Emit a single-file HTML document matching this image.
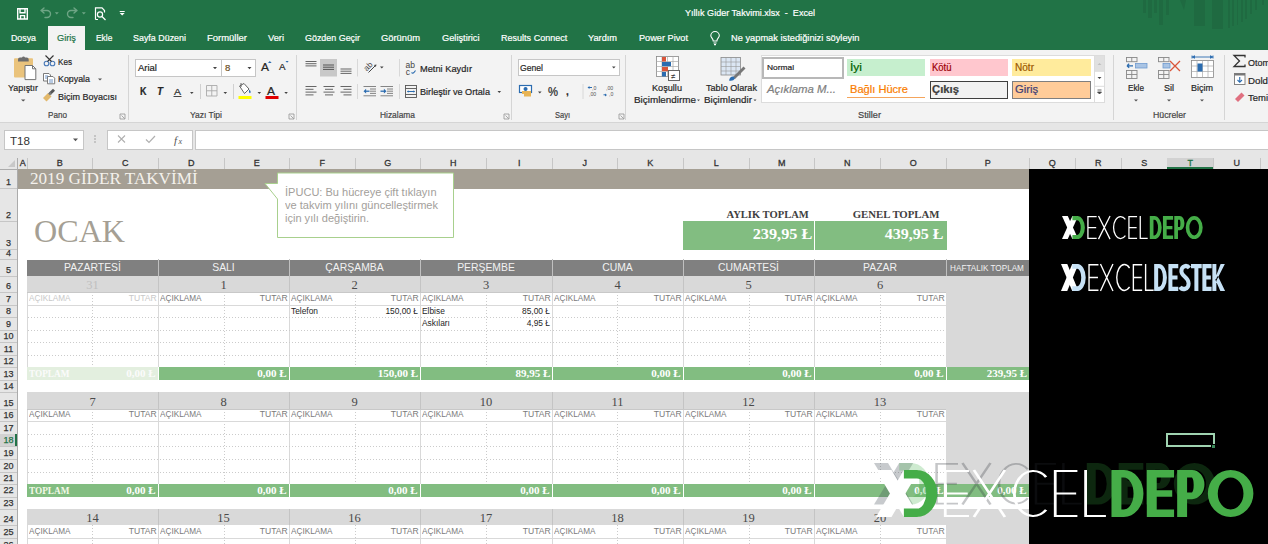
<!DOCTYPE html>
<html><head><meta charset="utf-8"><style>
html,body{margin:0;padding:0;}
body{width:1268px;height:544px;overflow:hidden;position:relative;background:#fff;font-family:"Liberation Sans",sans-serif;}
div{box-sizing:border-box;}
</style></head><body>
<div style="position:absolute;left:0px;top:0px;width:1268px;height:50px;background:#217346;"></div>
<div style="position:absolute;left:48px;top:26px;width:37px;height:24px;background:#f3f3f3;"></div>
<div style="position:absolute;left:0px;top:50px;width:1268px;height:72px;background:#f3f3f3;"></div>
<div style="position:absolute;left:0px;top:122px;width:1268px;height:1px;background:#d5d5d5;"></div>
<div style="position:absolute;left:128px;top:55px;width:1px;height:65px;background:#d5d5d5;"></div>
<div style="position:absolute;left:296px;top:55px;width:1px;height:65px;background:#d5d5d5;"></div>
<div style="position:absolute;left:511px;top:55px;width:1px;height:65px;background:#d5d5d5;"></div>
<div style="position:absolute;left:625px;top:55px;width:1px;height:65px;background:#d5d5d5;"></div>
<div style="position:absolute;left:1113px;top:55px;width:1px;height:65px;background:#d5d5d5;"></div>
<div style="position:absolute;left:1224px;top:55px;width:1px;height:65px;background:#d5d5d5;"></div>
<div style="position:absolute;left:1142.8px;top:0px;width:3.1000000000001364px;height:12.5px;background:#1f6a41;"></div>
<div style="position:absolute;left:1148px;top:0px;width:3.7000000000000455px;height:18px;background:#1f6a41;"></div>
<div style="position:absolute;left:1154px;top:0px;width:3px;height:13px;background:#1f6a41;"></div>
<div style="position:absolute;left:1159px;top:0px;width:3.599999999999909px;height:25px;background:#1f6a41;"></div>
<div style="position:absolute;left:1165.5px;top:0px;width:3.5px;height:15px;background:#1f6a41;"></div>
<div style="position:absolute;left:1194.4px;top:0px;width:10.199999999999818px;height:26px;background:#1f6a41;"></div>
<div style="position:absolute;left:1212.2px;top:0px;width:10.5px;height:29px;background:#1f6a41;"></div>
<div style="position:absolute;left:1228px;top:0px;width:2px;height:28px;background:#1f6a41;"></div>
<div style="position:absolute;left:1232px;top:0px;width:1.7999999999999545px;height:26px;background:#1f6a41;"></div>
<div style="position:absolute;left:1236.7px;top:0px;width:1.7999999999999545px;height:25px;background:#1f6a41;"></div>
<div style="position:absolute;left:1241px;top:0px;width:2px;height:22px;background:#1f6a41;"></div>
<div style="position:absolute;left:1245px;top:0px;width:2px;height:19px;background:#1f6a41;"></div>
<div style="position:absolute;left:1250px;top:0px;width:2px;height:14px;background:#1f6a41;"></div>
<div style="position:absolute;left:1255px;top:0px;width:2px;height:10px;background:#1f6a41;"></div>
<div style="position:absolute;left:1262px;top:0px;width:2px;height:5px;background:#1f6a41;"></div>
<svg style="position:absolute;left:1178px;top:0" width="10" height="12"><path d="M2 0 H8 L6 10 Z" fill="#1f6a41"/></svg>
<div style="position:absolute;left:135px;top:58.6px;width:87px;height:18px;background:#fff;border:1px solid #c6c6c6;"></div>
<div style="position:absolute;left:221px;top:58.6px;width:35px;height:18px;background:#fff;border:1px solid #c6c6c6;"></div>
<div style="position:absolute;left:517.5px;top:58.8px;width:102px;height:17.5px;background:#fff;border:1px solid #c6c6c6;"></div>
<div style="position:absolute;left:761px;top:55.3px;width:344px;height:47.5px;background:#fff;border:1px solid #dcdcdc;"></div>
<div style="position:absolute;left:762px;top:57px;width:82px;height:22px;background:#fff;border:2px solid #b8b8b8;"></div>
<div style="position:absolute;left:847px;top:59.3px;width:78px;height:17px;background:#c6efce;"></div>
<div style="position:absolute;left:929.5px;top:59.3px;width:78px;height:17px;background:#ffc7ce;"></div>
<div style="position:absolute;left:1012px;top:59.3px;width:78.5px;height:17px;background:#ffeb9c;"></div>
<div style="position:absolute;left:929.5px;top:81px;width:78px;height:17.7px;background:#f2f2f2;border:1.5px solid #3f3f3f;"></div>
<div style="position:absolute;left:1012px;top:81px;width:78.5px;height:17.7px;background:#ffcc99;border:1px solid #7f7f7f;"></div>
<div style="position:absolute;left:847px;top:96.8px;width:78px;height:1.6px;background:#f5a55c;"></div>
<div style="position:absolute;left:1094px;top:55.3px;width:11px;height:47.5px;background:#fff;border:1px solid #dcdcdc;"></div>
<div style="position:absolute;left:1095px;top:56.3px;width:9px;height:15px;background:#e0e0e0;"></div>
<svg style="position:absolute;left:0;top:0" width="1268" height="122"><g fill="none" stroke="#fff" stroke-width="1.4"><path d="M17.7 8.7 H27.3 V19 H17.7 Z"/><path d="M20 8.7 V12.7 H25 V8.7"/><path d="M20.5 19 V15.6 H24.5 V19"/></g><g fill="none" stroke="#6ea585" stroke-width="1.4" stroke-linecap="round"><path d="M41 10.5 L44 8 M41 10.5 L44 13 M41 10.5 H47 A3.5 3.5 0 0 1 47 17.5 H45"/><path d="M77 10.5 L74 8 M77 10.5 L74 13 M77 10.5 H71 A3.5 3.5 0 0 0 71 17.5 H73"/></g><path d="M54.8 12.2 h4 l-2 2.2z M81.8 12.2 h4 l-2 2.2z" fill="#6ea585"/><g fill="none" stroke="#fff" stroke-width="1.2"><path d="M95.5 19.5 V7.8 H102 L104.5 10.5 V12.5 M95.5 19.5 H98"/><circle cx="100" cy="14.5" r="2.6"/><path d="M102 16.5 L105.5 20"/></g><path d="M119.7 11 h5 v1 h-5z M119.7 13 h5 l-2.5 2.6z" fill="#fff"/><g fill="none" stroke="#fff" stroke-width="1.1"><path d="M713.2 41 C713.2 38.5 710.8 37.5 710.8 35.8 A4.2 4.2 0 0 1 719.3 35.8 C719.3 37.5 716.9 38.5 716.9 41 Z"/><path d="M713.5 43 H716.6 M714 44.6 H716"/></g><rect x="14" y="58.3" width="19" height="19.3" rx="1" fill="#eac37c"/><path d="M18 61.6 V59.5 Q18 57.5 20 57.5 H22 A1.6 1.6 0 0 1 25 57.5 H26.7 Q28.7 57.5 28.7 59.5 V61.6 Z" fill="#6d6d6d"/><path d="M25 65.5 H32.5 L35.8 68.8 V79.6 H25 Z" fill="#fff" stroke="#737373" stroke-width="1"/><path d="M32.5 65.5 V68.8 H35.8" fill="none" stroke="#737373" stroke-width="1"/><path d="M21 99.6 h4.4 l-2.2 2z" fill="#555"/><g fill="none" stroke-width="1.1"><circle cx="46.5" cy="63.5" r="2.3" stroke="#4a7ab8"/><circle cx="52.5" cy="63.5" r="2.3" stroke="#4a7ab8"/><path d="M47.5 61.5 L53.5 55.5 M51.5 61.5 L45.5 55.5" stroke="#333"/></g><g fill="#fff" stroke="#6d6d6d" stroke-width="0.9"><path d="M43.5 73.5 H49 L50.5 75 V81 H43.5 Z"/><path d="M47.5 76.5 H53 L54.7 78.2 V83.8 H47.5 Z"/></g><path d="M45 76 h3 M45 78 h2 M49 80 h4 M49 82 h4" stroke="#4a7ab8" stroke-width="0.8"/><path d="M43 98 L48 93 L51.5 96.5 L46.5 101.5 Z" fill="#e2b86b"/><path d="M49 92.5 L53 88.8 L55 90.8 L51.2 94.6 Z" fill="#555"/><path d="M48 93.5 L50 91.8 L52 93.8 L50 95.5Z" fill="#777"/><path d="M213 67 h4 l-2 2.2z M247.5 67 h4 l-2 2.2z" fill="#444"/><path d="M268 63 l1.8 -2 l1.8 2z" fill="#2b6cb0"/><path d="M285.5 61 l1.6 1.8 l1.6 -1.8z" fill="#2b6cb0"/><path d="M190 92 h3.6 l-1.8 2z M223.5 92 h3.6 l-1.8 2z M257.5 92 h3.6 l-1.8 2z M284.3 92 h3.6 l-1.8 2z" fill="#444"/><path d="M200.5 84 V99 M233.5 84 V99" stroke="#d0d0d0" stroke-width="1"/><path d="M173.5 96.5 h8" stroke="#444" stroke-width="1"/><g stroke="#aaa" stroke-width="0.9" fill="none"><path d="M206.5 85.5 h10.5 v10.5 h-10.5z M211.75 85.5 v10.5 M206.5 90.75 h10.5"/></g><path d="M239.5 86 L244 83.5 L249 89 L244.5 93.5 Z" fill="#fff" stroke="#555" stroke-width="0.9"/><path d="M241 83 V87" stroke="#555" stroke-width="0.9"/><path d="M249.5 89.5 q2 2.5 0.5 3.8 q-1.8 -1 -0.5 -3.8z" fill="#2b6cb0"/><rect x="238.5" y="96" width="13" height="3" fill="#ffff00"/><rect x="265.5" y="96" width="13" height="3" fill="#e00000"/><path d="M120 114 h5 v5 h-5z M121.5 115.5 l3 3" fill="none" stroke="#888" stroke-width="0.7"/><path d="M289 114 h5 v5 h-5z M290.5 115.5 l3 3" fill="none" stroke="#888" stroke-width="0.7"/><path d="M504 114 h5 v5 h-5z M505.5 115.5 l3 3" fill="none" stroke="#888" stroke-width="0.7"/><path d="M619 114 h5 v5 h-5z M620.5 115.5 l3 3" fill="none" stroke="#888" stroke-width="0.7"/><rect x="305.5" y="61.0" width="11" height="1" fill="#666"/><rect x="305.5" y="63.2" width="11" height="1" fill="#666"/><rect x="305.5" y="65.4" width="11" height="1" fill="#666"/><rect x="320" y="59" width="17" height="17.5" fill="#c8c8c8"/><rect x="323" y="64.5" width="11" height="1" fill="#555"/><rect x="323" y="66.7" width="11" height="1" fill="#555"/><rect x="323" y="68.9" width="11" height="1" fill="#555"/><rect x="340.5" y="68.5" width="11" height="1" fill="#666"/><rect x="340.5" y="70.7" width="11" height="1" fill="#666"/><rect x="340.5" y="72.9" width="11" height="1" fill="#666"/><path d="M357.5 59 V76.5 M357.5 84 V99 M399.5 59 V76.5 M399.5 84 V99" stroke="#d8d8d8"/><g transform="translate(368.5 65.5) rotate(-45)"><text x="-5.5" y="3" font-family="Liberation Sans" font-size="8" fill="#444">ab</text></g><path d="M368.5 72.5 L375.5 65.5" stroke="#444" stroke-width="1"/><path d="M376.5 64.5 l-2.6 0.6 l2 2z" fill="#444"/><path d="M380 66.5 h3.6 l-1.8 2z" fill="#444"/><rect x="305.5" y="86.0" width="11" height="1" fill="#666"/><rect x="305.5" y="88.8" width="8" height="1" fill="#666"/><rect x="305.5" y="91.6" width="11" height="1" fill="#666"/><rect x="305.5" y="94.4" width="8" height="1" fill="#666"/><g><rect x="323.5" y="86.0" width="11" height="1" fill="#666"/><rect x="325.0" y="88.8" width="8" height="1" fill="#666"/><rect x="323.5" y="91.6" width="11" height="1" fill="#666"/><rect x="325.0" y="94.4" width="8" height="1" fill="#666"/></g><g><rect x="340.5" y="86.0" width="11" height="1" fill="#666"/><rect x="343.5" y="88.8" width="8" height="1" fill="#666"/><rect x="340.5" y="91.6" width="11" height="1" fill="#666"/><rect x="343.5" y="94.4" width="8" height="1" fill="#666"/></g><path d="M363.5 86.5 h12.5 M370.0 89 h6 M370.0 91.2 h6 M370.0 93.4 h6 M363.5 95.8 h12.5" stroke="#777" stroke-width="0.9"/><path d="M365.0 91.2 h4.5" stroke="#2b6cb0" stroke-width="1.3"/><path d="M363.5 91.2 l2.6 -2.4 v4.8z" fill="#2b6cb0"/><path d="M380.5 86.5 h12.5 M387.0 89 h6 M387.0 91.2 h6 M387.0 93.4 h6 M380.5 95.8 h12.5" stroke="#777" stroke-width="0.9"/><path d="M380.5 91.2 h4.5" stroke="#2b6cb0" stroke-width="1.3"/><path d="M386.5 91.2 l-2.6 -2.4 v4.8z" fill="#2b6cb0"/><g fill="#444" font-family="Liberation Sans" font-size="8"><text x="405.5" y="67.5" font-size="8.5">ab</text><text x="405.8" y="74.5" font-size="8.5">c</text></g><path d="M411.5 72.5 q1.5 2 4 -2" stroke="#2b6cb0" stroke-width="1.1" fill="none"/><g fill="none" stroke="#555" stroke-width="0.9"><rect x="405.5" y="85.5" width="11" height="12"/><path d="M405.5 88.5 h11 M405.5 94.5 h11"/></g><path d="M407.5 91.5 h7" stroke="#2b6cb0" stroke-width="1"/><path d="M407 91.5 l1.5 -1.3 v2.6z M415 91.5 l-1.5 -1.3 v2.6z" fill="#2b6cb0"/><path d="M497.5 91 h3.6 l-1.8 2z" fill="#444"/><path d="M612 66.5 h3.6 l-1.8 2z" fill="#444"/><rect x="519.5" y="85.5" width="12" height="7" fill="#fff" stroke="#2b6cb0" stroke-width="1.2"/><rect x="522" y="91" width="9" height="3" fill="#e8b455"/><rect x="524" y="94" width="7" height="2.5" fill="#e8b455"/><path d="M525.5 87 a2 2 0 1 0 0.1 0" fill="#2b6cb0"/><path d="M538 91.5 h3.6 l-1.8 2z" fill="#444"/><path d="M583 84 V99" stroke="#d8d8d8"/><g font-family="Liberation Sans" font-size="5.2" fill="#555"><text x="592" y="90">,0</text><text x="589" y="95.5">,00</text><text x="606" y="90">,00</text><text x="609" y="95.5">,0</text></g><path d="M587.5 87.5 l2 -1.5 v3z M605 93.5 l2 1.5 l-2 1.5z" fill="#2b6cb0"/><path d="M589 87.5 h3 M603.5 94.8 h2" stroke="#2b6cb0"/><g stroke="#888" stroke-width="0.8" fill="#fff"><rect x="656.5" y="56.5" width="22" height="20"/></g><path d="M656.5 61.5 h22 M656.5 66.5 h22 M656.5 71.5 h22 M662 56.5 v20 M667.5 56.5 v20 M673 56.5 v20" stroke="#aaa" stroke-width="0.7"/><rect x="662" y="57" width="4" height="4.5" fill="#d9553a"/><rect x="662" y="62" width="9" height="4.2" fill="#2b6cb0"/><rect x="662" y="67" width="6" height="4.2" fill="#d9553a"/><rect x="662" y="72" width="4" height="4.5" fill="#2b6cb0"/><rect x="668.5" y="70.5" width="11" height="10" fill="#fff" stroke="#666"/><text x="671" y="78.8" font-family="Liberation Sans" font-size="8" fill="#333">≠</text><rect x="721" y="57.5" width="19.5" height="17.5" fill="#dbe6f3" stroke="#888" stroke-width="0.8"/><path d="M721 62 h19.5 M721 66.5 h19.5 M721 71 h19.5 M726 57.5 v17.5 M731 57.5 v17.5 M736 57.5 v17.5" stroke="#999" stroke-width="0.6"/><path d="M733 77 L743.5 66.5 L745.5 68.5 L735 79 Z" fill="#777"/><path d="M729 80.5 Q730 76 733.5 76.5 L735 78.5 Q733 81.5 729 80.5Z" fill="#2b6cb0"/><path d="M697 99.5 h3 l-1.5 1.7z M753.5 99.5 h3 l-1.5 1.7z" fill="#555"/><path d="M1097.5 65 l2 -2 l2 2z" fill="#c0c0c0"/><path d="M1097.5 77 h4 l-2 2z" fill="#444"/><path d="M1097.5 90 h4 M1097.5 92 h4 l-2 2z" stroke="#444" stroke-width="0.8" fill="#444"/><path d="M1094 71.3 h11 M1094 86.3 h11" stroke="#dcdcdc"/><g fill="none" stroke="#888" stroke-width="0.9"><rect x="1126.5" y="57.5" width="10.5" height="4.2"/><path d="M1131.75 57.5 v4.2"/><rect x="1126.5" y="70.5" width="10.5" height="8"/><path d="M1131.75 70.5 v8 M1126.5 74.5 h10.5"/></g><rect x="1135.5" y="63.5" width="11.5" height="4.5" fill="#a9c4e4" stroke="#6f9bd0" stroke-width="0.8"/><path d="M1127 65.8 h6 M1127 65.8 l2.2 -2 M1127 65.8 l2.2 2" stroke="#2b6cb0" stroke-width="1.2" fill="none"/><g fill="none" stroke="#888" stroke-width="0.9"><rect x="1158.5" y="57.5" width="10.5" height="4.2"/><path d="M1163.75 57.5 v4.2"/><rect x="1158.5" y="70.5" width="10.5" height="8"/><path d="M1163.75 70.5 v8 M1158.5 74.5 h10.5"/></g><rect x="1163" y="63.5" width="7" height="4.5" fill="#a9c4e4" stroke="#6f9bd0" stroke-width="0.8"/><path d="M1170 61 L1180 71 M1180 61 L1170 71" stroke="#d9553a" stroke-width="1.3"/><path d="M1192 57 h21 M1192 55.5 v3 M1213 55.5 v3 M1192.5 57 l2 -1.3 v2.6z M1212.5 57 l-2 -1.3 v2.6z" stroke="#2b6cb0" stroke-width="0.9" fill="#2b6cb0"/><g fill="#fff" stroke="#888" stroke-width="0.8"><rect x="1191.5" y="60.5" width="22" height="17"/></g><path d="M1191.5 66 h22 M1191.5 71.5 h22 M1197 60.5 v17 M1202.5 60.5 v17 M1208 60.5 v17" stroke="#aaa" stroke-width="0.7"/><rect x="1197.5" y="63.5" width="5" height="8" fill="#2b6cb0"/><path d="M1134 99.5 h4 l-2 2z M1167 99.5 h4 l-2 2z M1200 99.5 h4 l-2 2z" fill="#555"/><path d="M1245 57.5 V55.5 H1234 L1239.5 61 L1234 66.5 H1245 V64.5" fill="none" stroke="#333" stroke-width="1.3"/><rect x="1234.5" y="73.5" width="10.5" height="11" fill="#fff" stroke="#777" stroke-width="0.9"/><rect x="1234.5" y="73.5" width="10.5" height="2" fill="#777"/><path d="M1239.75 77 v5 M1237.5 80 l2.25 2.3 l2.25 -2.3" stroke="#2b6cb0" stroke-width="1.1" fill="none"/><path d="M1235 99 L1241.5 92.5 L1244.5 95.5 L1238 102 Z" fill="#e07080"/></svg>
<div style="position:absolute;top:7.76px;font:normal 9.5px/9.5px 'Liberation Sans', sans-serif;color:#fff;white-space:nowrap;-webkit-text-stroke:0.2px currentColor;transform:scaleX(0.952);transform-origin:left;left:685px;">Yıllık Gider Takvimi.xlsx&nbsp;&nbsp;-&nbsp;&nbsp;Excel</div>
<div style="position:absolute;top:33.20px;font:normal 9.8px/9.8px 'Liberation Sans', sans-serif;color:#fff;white-space:nowrap;-webkit-text-stroke:0.2px currentColor;transform:scaleX(0.900);transform-origin:left;left:10.6px;">Dosya</div>
<div style="position:absolute;top:33.20px;font:normal 9.8px/9.8px 'Liberation Sans', sans-serif;color:#217346;white-space:nowrap;-webkit-text-stroke:0.2px currentColor;transform:scaleX(0.943);transform-origin:left;left:56.8px;">Giriş</div>
<div style="position:absolute;top:33.20px;font:normal 9.8px/9.8px 'Liberation Sans', sans-serif;color:#fff;white-space:nowrap;-webkit-text-stroke:0.2px currentColor;transform:scaleX(0.855);transform-origin:left;left:96px;">Ekle</div>
<div style="position:absolute;top:33.20px;font:normal 9.8px/9.8px 'Liberation Sans', sans-serif;color:#fff;white-space:nowrap;-webkit-text-stroke:0.2px currentColor;transform:scaleX(0.909);transform-origin:left;left:133px;">Sayfa Düzeni</div>
<div style="position:absolute;top:33.20px;font:normal 9.8px/9.8px 'Liberation Sans', sans-serif;color:#fff;white-space:nowrap;-webkit-text-stroke:0.2px currentColor;transform:scaleX(0.967);transform-origin:left;left:207px;">Formüller</div>
<div style="position:absolute;top:33.20px;font:normal 9.8px/9.8px 'Liberation Sans', sans-serif;color:#fff;white-space:nowrap;-webkit-text-stroke:0.2px currentColor;transform:scaleX(0.948);transform-origin:left;left:268px;">Veri</div>
<div style="position:absolute;top:33.20px;font:normal 9.8px/9.8px 'Liberation Sans', sans-serif;color:#fff;white-space:nowrap;-webkit-text-stroke:0.2px currentColor;transform:scaleX(0.910);transform-origin:left;left:304.7px;">Gözden Geçir</div>
<div style="position:absolute;top:33.20px;font:normal 9.8px/9.8px 'Liberation Sans', sans-serif;color:#fff;white-space:nowrap;-webkit-text-stroke:0.2px currentColor;transform:scaleX(0.955);transform-origin:left;left:381px;">Görünüm</div>
<div style="position:absolute;top:33.20px;font:normal 9.8px/9.8px 'Liberation Sans', sans-serif;color:#fff;white-space:nowrap;-webkit-text-stroke:0.2px currentColor;transform:scaleX(0.944);transform-origin:left;left:442px;">Geliştirici</div>
<div style="position:absolute;top:33.20px;font:normal 9.8px/9.8px 'Liberation Sans', sans-serif;color:#fff;white-space:nowrap;-webkit-text-stroke:0.2px currentColor;transform:scaleX(0.922);transform-origin:left;left:500.5px;">Results Connect</div>
<div style="position:absolute;top:33.20px;font:normal 9.8px/9.8px 'Liberation Sans', sans-serif;color:#fff;white-space:nowrap;-webkit-text-stroke:0.2px currentColor;transform:scaleX(0.940);transform-origin:left;left:588px;">Yardım</div>
<div style="position:absolute;top:33.20px;font:normal 9.8px/9.8px 'Liberation Sans', sans-serif;color:#fff;white-space:nowrap;-webkit-text-stroke:0.2px currentColor;transform:scaleX(0.937);transform-origin:left;left:638.7px;">Power Pivot</div>
<div style="position:absolute;top:33.20px;font:normal 9.8px/9.8px 'Liberation Sans', sans-serif;color:#fff;white-space:nowrap;-webkit-text-stroke:0.2px currentColor;transform:scaleX(0.947);transform-origin:left;left:731px;">Ne yapmak istediğinizi söyleyin</div>
<div style="position:absolute;top:82.87px;font:normal 9.6px/9.6px 'Liberation Sans', sans-serif;color:#262626;white-space:nowrap;-webkit-text-stroke:0.2px currentColor;transform:scaleX(0.927);transform-origin:left;left:8.1px;">Yapıştır</div>
<div style="position:absolute;top:56.87px;font:normal 9.6px/9.6px 'Liberation Sans', sans-serif;color:#262626;white-space:nowrap;-webkit-text-stroke:0.2px currentColor;transform:scaleX(0.846);transform-origin:left;left:58px;">Kes</div>
<div style="position:absolute;top:73.87px;font:normal 9.6px/9.6px 'Liberation Sans', sans-serif;color:#262626;white-space:nowrap;-webkit-text-stroke:0.2px currentColor;transform:scaleX(0.922);transform-origin:left;left:58px;">Kopyala</div>
<svg style="position:absolute;left:0;top:0" width="130" height="122"><path d="M98 78.5 h4 l-2 2z" fill="#555"/></svg>
<div style="position:absolute;top:91.87px;font:normal 9.6px/9.6px 'Liberation Sans', sans-serif;color:#262626;white-space:nowrap;-webkit-text-stroke:0.2px currentColor;transform:scaleX(0.937);transform-origin:left;left:58px;">Biçim Boyacısı</div>
<div style="position:absolute;top:63.17px;font:normal 9.6px/9.6px 'Liberation Sans', sans-serif;color:#262626;white-space:nowrap;-webkit-text-stroke:0.2px currentColor;transform:scaleX(0.989);transform-origin:left;left:138px;">Arial</div>
<div style="position:absolute;top:63.17px;font:normal 9.6px/9.6px 'Liberation Sans', sans-serif;color:#6b4f1f;white-space:nowrap;-webkit-text-stroke:0.2px currentColor;left:225px;">8</div>
<div style="position:absolute;top:61.69px;font:normal 11px/11px 'Liberation Sans', sans-serif;color:#262626;white-space:nowrap;-webkit-text-stroke:0.2px currentColor;transform:scaleX(1.090);transform-origin:left;left:260.5px;">A</div>
<div style="position:absolute;top:63.38px;font:normal 9px/9px 'Liberation Sans', sans-serif;color:#262626;white-space:nowrap;-webkit-text-stroke:0.2px currentColor;transform:scaleX(1.083);transform-origin:left;left:279px;">A</div>
<div style="position:absolute;top:87.03px;font:bold 10px/10px 'Liberation Sans', sans-serif;color:#262626;white-space:nowrap;-webkit-text-stroke:0.2px currentColor;transform:scaleX(0.900);transform-origin:left;left:140px;">K</div>
<div style="position:absolute;top:87.03px;font:bold 10px/10px 'Liberation Sans', sans-serif;color:#262626;white-space:nowrap;font-style:italic;-webkit-text-stroke:0.2px currentColor;transform:scaleX(0.982);transform-origin:left;left:157px;">T</div>
<div style="position:absolute;top:86.87px;font:normal 9.6px/9.6px 'Liberation Sans', sans-serif;color:#262626;white-space:nowrap;-webkit-text-stroke:0.2px currentColor;transform:scaleX(1.093);transform-origin:left;left:174px;">A</div>
<div style="position:absolute;top:86.53px;font:normal 10px/10px 'Liberation Sans', sans-serif;color:#262626;white-space:nowrap;-webkit-text-stroke:0.2px currentColor;transform:scaleX(1.199);transform-origin:left;left:267px;">A</div>
<div style="position:absolute;top:63.87px;font:normal 9.6px/9.6px 'Liberation Sans', sans-serif;color:#262626;white-space:nowrap;-webkit-text-stroke:0.2px currentColor;transform:scaleX(0.965);transform-origin:left;left:420px;">Metni Kaydır</div>
<div style="position:absolute;top:87.37px;font:normal 9.6px/9.6px 'Liberation Sans', sans-serif;color:#262626;white-space:nowrap;-webkit-text-stroke:0.2px currentColor;transform:scaleX(0.951);transform-origin:left;left:420px;">Birleştir ve Ortala</div>
<div style="position:absolute;top:62.87px;font:normal 9.6px/9.6px 'Liberation Sans', sans-serif;color:#262626;white-space:nowrap;-webkit-text-stroke:0.2px currentColor;transform:scaleX(0.898);transform-origin:left;left:520px;">Genel</div>
<div style="position:absolute;top:85.84px;font:normal 12px/12px 'Liberation Sans', sans-serif;color:#262626;white-space:nowrap;-webkit-text-stroke:0.2px currentColor;transform:scaleX(0.937);transform-origin:left;left:548px;">%</div>
<div style="position:absolute;top:86.53px;font:bold 10px/10px 'Liberation Sans', sans-serif;color:#262626;white-space:nowrap;-webkit-text-stroke:0.2px currentColor;left:566px;">,</div>
<div style="position:absolute;top:82.87px;font:normal 9.6px/9.6px 'Liberation Sans', sans-serif;color:#262626;white-space:nowrap;-webkit-text-stroke:0.2px currentColor;transform:scaleX(0.953);transform-origin:left;left:652px;">Koşullu</div>
<div style="position:absolute;top:94.87px;font:normal 9.6px/9.6px 'Liberation Sans', sans-serif;color:#262626;white-space:nowrap;-webkit-text-stroke:0.2px currentColor;transform:scaleX(1.029);transform-origin:left;left:634px;">Biçimlendirme</div>
<div style="position:absolute;top:82.87px;font:normal 9.6px/9.6px 'Liberation Sans', sans-serif;color:#262626;white-space:nowrap;-webkit-text-stroke:0.2px currentColor;transform:scaleX(0.946);transform-origin:left;left:706px;">Tablo Olarak</div>
<div style="position:absolute;top:94.87px;font:normal 9.6px/9.6px 'Liberation Sans', sans-serif;color:#262626;white-space:nowrap;-webkit-text-stroke:0.2px currentColor;transform:scaleX(1.022);transform-origin:left;left:704px;">Biçimlendir</div>
<div style="position:absolute;top:64.23px;font:normal 8px/8px 'Liberation Sans', sans-serif;color:#262626;white-space:nowrap;-webkit-text-stroke:0.2px currentColor;transform:scaleX(1.047);transform-origin:left;left:767px;">Normal</div>
<div style="position:absolute;top:62.53px;font:normal 10px/10px 'Liberation Sans', sans-serif;color:#006100;white-space:nowrap;-webkit-text-stroke:0.2px currentColor;transform:scaleX(1.200);transform-origin:left;left:849.5px;">İyi</div>
<div style="position:absolute;top:62.53px;font:normal 10px/10px 'Liberation Sans', sans-serif;color:#9c0006;white-space:nowrap;-webkit-text-stroke:0.2px currentColor;transform:scaleX(0.948);transform-origin:left;left:932px;">Kötü</div>
<div style="position:absolute;top:62.53px;font:normal 10px/10px 'Liberation Sans', sans-serif;color:#9c5700;white-space:nowrap;-webkit-text-stroke:0.2px currentColor;transform:scaleX(1.006);transform-origin:left;left:1015px;">Nötr</div>
<div style="position:absolute;top:84.11px;font:normal 10.5px/10.5px 'Liberation Sans', sans-serif;color:#7f7f7f;white-space:nowrap;font-style:italic;-webkit-text-stroke:0.2px currentColor;transform:scaleX(1.085);transform-origin:left;left:767px;">Açıklama M...</div>
<div style="position:absolute;top:84.11px;font:normal 10.5px/10.5px 'Liberation Sans', sans-serif;color:#fa7d00;white-space:nowrap;-webkit-text-stroke:0.2px currentColor;transform:scaleX(1.057);transform-origin:left;left:849.5px;">Bağlı Hücre</div>
<div style="position:absolute;top:84.11px;font:bold 10.5px/10.5px 'Liberation Sans', sans-serif;color:#3f3f3f;white-space:nowrap;-webkit-text-stroke:0.2px currentColor;transform:scaleX(1.076);transform-origin:left;left:932px;">Çıkış</div>
<div style="position:absolute;top:84.11px;font:normal 10.5px/10.5px 'Liberation Sans', sans-serif;color:#3f3f76;white-space:nowrap;-webkit-text-stroke:0.2px currentColor;transform:scaleX(1.066);transform-origin:left;left:1015px;">Giriş</div>
<div style="position:absolute;top:82.87px;font:normal 9.6px/9.6px 'Liberation Sans', sans-serif;color:#262626;white-space:nowrap;-webkit-text-stroke:0.2px currentColor;transform:scaleX(0.857);transform-origin:left;left:1128px;">Ekle</div>
<div style="position:absolute;top:82.87px;font:normal 9.6px/9.6px 'Liberation Sans', sans-serif;color:#262626;white-space:nowrap;-webkit-text-stroke:0.2px currentColor;transform:scaleX(0.937);transform-origin:left;left:1164px;">Sil</div>
<div style="position:absolute;top:82.87px;font:normal 9.6px/9.6px 'Liberation Sans', sans-serif;color:#262626;white-space:nowrap;-webkit-text-stroke:0.2px currentColor;transform:scaleX(0.938);transform-origin:left;left:1191px;">Biçim</div>
<div style="position:absolute;top:57.87px;font:normal 9.6px/9.6px 'Liberation Sans', sans-serif;color:#262626;white-space:nowrap;-webkit-text-stroke:0.2px currentColor;transform:scaleX(0.937);transform-origin:left;left:1248px;">Otom</div>
<div style="position:absolute;top:75.87px;font:normal 9.6px/9.6px 'Liberation Sans', sans-serif;color:#262626;white-space:nowrap;-webkit-text-stroke:0.2px currentColor;transform:scaleX(1.013);transform-origin:left;left:1248px;">Dold</div>
<div style="position:absolute;top:92.87px;font:normal 9.6px/9.6px 'Liberation Sans', sans-serif;color:#262626;white-space:nowrap;-webkit-text-stroke:0.2px currentColor;transform:scaleX(0.987);transform-origin:left;left:1248px;">Temi</div>
<div style="position:absolute;top:109.87px;font:normal 9.6px/9.6px 'Liberation Sans', sans-serif;color:#444;white-space:nowrap;-webkit-text-stroke:0.2px currentColor;transform:scaleX(0.847);transform-origin:left;left:48px;">Pano</div>
<div style="position:absolute;top:109.87px;font:normal 9.6px/9.6px 'Liberation Sans', sans-serif;color:#444;white-space:nowrap;-webkit-text-stroke:0.2px currentColor;transform:scaleX(0.886);transform-origin:left;left:190px;">Yazı Tipi</div>
<div style="position:absolute;top:109.87px;font:normal 9.6px/9.6px 'Liberation Sans', sans-serif;color:#444;white-space:nowrap;-webkit-text-stroke:0.2px currentColor;transform:scaleX(0.875);transform-origin:left;left:380px;">Hizalama</div>
<div style="position:absolute;top:109.87px;font:normal 9.6px/9.6px 'Liberation Sans', sans-serif;color:#444;white-space:nowrap;-webkit-text-stroke:0.2px currentColor;transform:scaleX(0.781);transform-origin:left;left:555px;">Sayı</div>
<div style="position:absolute;top:109.87px;font:normal 9.6px/9.6px 'Liberation Sans', sans-serif;color:#444;white-space:nowrap;-webkit-text-stroke:0.2px currentColor;transform:scaleX(0.958);transform-origin:left;left:858px;">Stiller</div>
<div style="position:absolute;top:109.87px;font:normal 9.6px/9.6px 'Liberation Sans', sans-serif;color:#444;white-space:nowrap;-webkit-text-stroke:0.2px currentColor;transform:scaleX(0.910);transform-origin:left;left:1153px;">Hücreler</div>
<div style="position:absolute;left:0px;top:123px;width:1268px;height:46px;background:#e6e6e6;"></div>
<div style="position:absolute;left:4px;top:130px;width:80px;height:20px;background:#fff;border:1px solid #c6c6c6;"></div>
<div style="position:absolute;top:135.69px;font:normal 11px/11px 'Liberation Sans', sans-serif;color:#333;white-space:nowrap;transform:scaleX(1.055);transform-origin:left;left:10px;">T18</div>
<div style="position:absolute;left:107px;top:130px;width:86px;height:20px;background:#fff;border:1px solid #c6c6c6;"></div>
<div style="position:absolute;left:195px;top:130px;width:1073px;height:20px;background:#fff;border:1px solid #c6c6c6;border-right:none;"></div>
<svg style="position:absolute;left:0;top:122px" width="200" height="36"><path d="M73 16.5 h5 l-2.5 2.8z" fill="#555"/><circle cx="95" cy="14" r="0.7" fill="#888"/><circle cx="95" cy="17" r="0.7" fill="#888"/><circle cx="95" cy="20" r="0.7" fill="#888"/><path d="M118 13.5 l7 7 M125 13.5 l-7 7" stroke="#b0b0b0" stroke-width="1.1"/><path d="M146 17.5 l3 3 l6 -6.5" stroke="#b0b0b0" stroke-width="1.2" fill="none"/></svg>
<div style="position:absolute;top:135.29px;font:normal 11px/11px 'Liberation Serif', serif;color:#555;white-space:nowrap;font-style:italic;left:174px;">f</div>
<div style="position:absolute;top:138.30px;font:normal 8px/8px 'Liberation Serif', serif;color:#555;white-space:nowrap;font-style:italic;left:178.5px;">x</div>
<div style="position:absolute;left:0px;top:158px;width:1268px;height:11px;background:#e6e6e6;"></div>
<div style="position:absolute;left:0px;top:169px;width:1268px;height:1px;background:#ababab;"></div>
<div style="position:absolute;left:27px;top:158px;width:1px;height:11px;background:#c6c6c6;"></div>
<div style="position:absolute;top:159.38px;font:normal 9px/9px 'Liberation Sans', sans-serif;color:#333;white-space:nowrap;-webkit-text-stroke:0.3px currentColor;left:2.8000000000000007px;width:40px;text-align:center;">A</div>
<div style="position:absolute;left:92px;top:158px;width:1px;height:11px;background:#c6c6c6;"></div>
<div style="position:absolute;top:159.38px;font:normal 9px/9px 'Liberation Sans', sans-serif;color:#333;white-space:nowrap;-webkit-text-stroke:0.3px currentColor;left:39.8px;width:40px;text-align:center;">B</div>
<div style="position:absolute;left:158px;top:158px;width:1px;height:11px;background:#c6c6c6;"></div>
<div style="position:absolute;top:159.38px;font:normal 9px/9px 'Liberation Sans', sans-serif;color:#333;white-space:nowrap;-webkit-text-stroke:0.3px currentColor;left:105.3px;width:40px;text-align:center;">C</div>
<div style="position:absolute;left:224px;top:158px;width:1px;height:11px;background:#c6c6c6;"></div>
<div style="position:absolute;top:159.38px;font:normal 9px/9px 'Liberation Sans', sans-serif;color:#333;white-space:nowrap;-webkit-text-stroke:0.3px currentColor;left:171.3px;width:40px;text-align:center;">D</div>
<div style="position:absolute;left:289px;top:158px;width:1px;height:11px;background:#c6c6c6;"></div>
<div style="position:absolute;top:159.38px;font:normal 9px/9px 'Liberation Sans', sans-serif;color:#333;white-space:nowrap;-webkit-text-stroke:0.3px currentColor;left:236.8px;width:40px;text-align:center;">E</div>
<div style="position:absolute;left:355px;top:158px;width:1px;height:11px;background:#c6c6c6;"></div>
<div style="position:absolute;top:159.38px;font:normal 9px/9px 'Liberation Sans', sans-serif;color:#333;white-space:nowrap;-webkit-text-stroke:0.3px currentColor;left:302.3px;width:40px;text-align:center;">F</div>
<div style="position:absolute;left:420px;top:158px;width:1px;height:11px;background:#c6c6c6;"></div>
<div style="position:absolute;top:159.38px;font:normal 9px/9px 'Liberation Sans', sans-serif;color:#333;white-space:nowrap;-webkit-text-stroke:0.3px currentColor;left:367.8px;width:40px;text-align:center;">G</div>
<div style="position:absolute;left:486px;top:158px;width:1px;height:11px;background:#c6c6c6;"></div>
<div style="position:absolute;top:159.38px;font:normal 9px/9px 'Liberation Sans', sans-serif;color:#333;white-space:nowrap;-webkit-text-stroke:0.3px currentColor;left:433.3px;width:40px;text-align:center;">H</div>
<div style="position:absolute;left:552px;top:158px;width:1px;height:11px;background:#c6c6c6;"></div>
<div style="position:absolute;top:159.38px;font:normal 9px/9px 'Liberation Sans', sans-serif;color:#333;white-space:nowrap;-webkit-text-stroke:0.3px currentColor;left:499.29999999999995px;width:40px;text-align:center;">I</div>
<div style="position:absolute;left:617px;top:158px;width:1px;height:11px;background:#c6c6c6;"></div>
<div style="position:absolute;top:159.38px;font:normal 9px/9px 'Liberation Sans', sans-serif;color:#333;white-space:nowrap;-webkit-text-stroke:0.3px currentColor;left:564.8px;width:40px;text-align:center;">J</div>
<div style="position:absolute;left:683px;top:158px;width:1px;height:11px;background:#c6c6c6;"></div>
<div style="position:absolute;top:159.38px;font:normal 9px/9px 'Liberation Sans', sans-serif;color:#333;white-space:nowrap;-webkit-text-stroke:0.3px currentColor;left:630.3px;width:40px;text-align:center;">K</div>
<div style="position:absolute;left:749px;top:158px;width:1px;height:11px;background:#c6c6c6;"></div>
<div style="position:absolute;top:159.38px;font:normal 9px/9px 'Liberation Sans', sans-serif;color:#333;white-space:nowrap;-webkit-text-stroke:0.3px currentColor;left:696.3px;width:40px;text-align:center;">L</div>
<div style="position:absolute;left:814px;top:158px;width:1px;height:11px;background:#c6c6c6;"></div>
<div style="position:absolute;top:159.38px;font:normal 9px/9px 'Liberation Sans', sans-serif;color:#333;white-space:nowrap;-webkit-text-stroke:0.3px currentColor;left:761.8px;width:40px;text-align:center;">M</div>
<div style="position:absolute;left:880px;top:158px;width:1px;height:11px;background:#c6c6c6;"></div>
<div style="position:absolute;top:159.38px;font:normal 9px/9px 'Liberation Sans', sans-serif;color:#333;white-space:nowrap;-webkit-text-stroke:0.3px currentColor;left:827.3px;width:40px;text-align:center;">N</div>
<div style="position:absolute;left:946px;top:158px;width:1px;height:11px;background:#c6c6c6;"></div>
<div style="position:absolute;top:159.38px;font:normal 9px/9px 'Liberation Sans', sans-serif;color:#333;white-space:nowrap;-webkit-text-stroke:0.3px currentColor;left:893.3px;width:40px;text-align:center;">O</div>
<div style="position:absolute;left:1029px;top:158px;width:1px;height:11px;background:#c6c6c6;"></div>
<div style="position:absolute;top:159.38px;font:normal 9px/9px 'Liberation Sans', sans-serif;color:#333;white-space:nowrap;-webkit-text-stroke:0.3px currentColor;left:967.8px;width:40px;text-align:center;">P</div>
<div style="position:absolute;left:1075px;top:158px;width:1px;height:11px;background:#c6c6c6;"></div>
<div style="position:absolute;top:159.38px;font:normal 9px/9px 'Liberation Sans', sans-serif;color:#333;white-space:nowrap;-webkit-text-stroke:0.3px currentColor;left:1032.3px;width:40px;text-align:center;">Q</div>
<div style="position:absolute;left:1121px;top:158px;width:1px;height:11px;background:#c6c6c6;"></div>
<div style="position:absolute;top:159.38px;font:normal 9px/9px 'Liberation Sans', sans-serif;color:#333;white-space:nowrap;-webkit-text-stroke:0.3px currentColor;left:1078.3px;width:40px;text-align:center;">R</div>
<div style="position:absolute;left:1167px;top:158px;width:1px;height:11px;background:#c6c6c6;"></div>
<div style="position:absolute;top:159.38px;font:normal 9px/9px 'Liberation Sans', sans-serif;color:#333;white-space:nowrap;-webkit-text-stroke:0.3px currentColor;left:1124.3px;width:40px;text-align:center;">S</div>
<div style="position:absolute;left:1167px;top:158px;width:46px;height:11px;background:#d2d2d2;"></div>
<div style="position:absolute;left:1167px;top:167px;width:46px;height:2px;background:#217346;"></div>
<div style="position:absolute;left:1213px;top:158px;width:1px;height:11px;background:#c6c6c6;"></div>
<div style="position:absolute;top:159.38px;font:normal 9px/9px 'Liberation Sans', sans-serif;color:#217346;white-space:nowrap;-webkit-text-stroke:0.3px currentColor;left:1170.3px;width:40px;text-align:center;">T</div>
<div style="position:absolute;left:1260px;top:158px;width:1px;height:11px;background:#c6c6c6;"></div>
<div style="position:absolute;top:159.38px;font:normal 9px/9px 'Liberation Sans', sans-serif;color:#333;white-space:nowrap;-webkit-text-stroke:0.3px currentColor;left:1216.8px;width:40px;text-align:center;">U</div>
<div style="position:absolute;left:0px;top:170px;width:17px;height:374px;background:#e6e6e6;"></div>
<div style="position:absolute;left:17px;top:158px;width:1px;height:386px;background:#ababab;"></div>
<div style="position:absolute;left:0px;top:188px;width:17px;height:1px;background:#c6c6c6;"></div>
<div style="position:absolute;top:178.38px;font:normal 9px/9px 'Liberation Sans', sans-serif;color:#333;white-space:nowrap;-webkit-text-stroke:0.25px currentColor;left:0.0px;width:17px;text-align:center;">1</div>
<div style="position:absolute;left:0px;top:221px;width:17px;height:1px;background:#c6c6c6;"></div>
<div style="position:absolute;top:211.18px;font:normal 9px/9px 'Liberation Sans', sans-serif;color:#333;white-space:nowrap;-webkit-text-stroke:0.25px currentColor;left:0.0px;width:17px;text-align:center;">2</div>
<div style="position:absolute;left:0px;top:249px;width:17px;height:1px;background:#c6c6c6;"></div>
<div style="position:absolute;top:239.28px;font:normal 9px/9px 'Liberation Sans', sans-serif;color:#333;white-space:nowrap;-webkit-text-stroke:0.25px currentColor;left:0.0px;width:17px;text-align:center;">3</div>
<div style="position:absolute;left:0px;top:259px;width:17px;height:1px;background:#c6c6c6;"></div>
<div style="position:absolute;top:249.28px;font:normal 9px/9px 'Liberation Sans', sans-serif;color:#333;white-space:nowrap;-webkit-text-stroke:0.25px currentColor;left:0.0px;width:17px;text-align:center;">4</div>
<div style="position:absolute;left:0px;top:276px;width:17px;height:1px;background:#c6c6c6;"></div>
<div style="position:absolute;top:265.88px;font:normal 9px/9px 'Liberation Sans', sans-serif;color:#333;white-space:nowrap;-webkit-text-stroke:0.25px currentColor;left:0.0px;width:17px;text-align:center;">5</div>
<div style="position:absolute;left:0px;top:292px;width:17px;height:1px;background:#c6c6c6;"></div>
<div style="position:absolute;top:282.28px;font:normal 9px/9px 'Liberation Sans', sans-serif;color:#333;white-space:nowrap;-webkit-text-stroke:0.25px currentColor;left:0.0px;width:17px;text-align:center;">6</div>
<div style="position:absolute;left:0px;top:305px;width:17px;height:1px;background:#c6c6c6;"></div>
<div style="position:absolute;top:294.88px;font:normal 9px/9px 'Liberation Sans', sans-serif;color:#333;white-space:nowrap;-webkit-text-stroke:0.25px currentColor;left:0.0px;width:17px;text-align:center;">7</div>
<div style="position:absolute;left:0px;top:317px;width:17px;height:1px;background:#c6c6c6;"></div>
<div style="position:absolute;top:307.18px;font:normal 9px/9px 'Liberation Sans', sans-serif;color:#333;white-space:nowrap;-webkit-text-stroke:0.25px currentColor;left:0.0px;width:17px;text-align:center;">8</div>
<div style="position:absolute;left:0px;top:330px;width:17px;height:1px;background:#c6c6c6;"></div>
<div style="position:absolute;top:319.88px;font:normal 9px/9px 'Liberation Sans', sans-serif;color:#333;white-space:nowrap;-webkit-text-stroke:0.25px currentColor;left:0.0px;width:17px;text-align:center;">9</div>
<div style="position:absolute;left:0px;top:342px;width:17px;height:1px;background:#c6c6c6;"></div>
<div style="position:absolute;top:332.38px;font:normal 9px/9px 'Liberation Sans', sans-serif;color:#333;white-space:nowrap;-webkit-text-stroke:0.25px currentColor;left:0.0px;width:17px;text-align:center;">10</div>
<div style="position:absolute;left:0px;top:355px;width:17px;height:1px;background:#c6c6c6;"></div>
<div style="position:absolute;top:344.88px;font:normal 9px/9px 'Liberation Sans', sans-serif;color:#333;white-space:nowrap;-webkit-text-stroke:0.25px currentColor;left:0.0px;width:17px;text-align:center;">11</div>
<div style="position:absolute;left:0px;top:367px;width:17px;height:1px;background:#c6c6c6;"></div>
<div style="position:absolute;top:357.18px;font:normal 9px/9px 'Liberation Sans', sans-serif;color:#333;white-space:nowrap;-webkit-text-stroke:0.25px currentColor;left:0.0px;width:17px;text-align:center;">12</div>
<div style="position:absolute;left:0px;top:380px;width:17px;height:1px;background:#c6c6c6;"></div>
<div style="position:absolute;top:369.88px;font:normal 9px/9px 'Liberation Sans', sans-serif;color:#333;white-space:nowrap;-webkit-text-stroke:0.25px currentColor;left:0.0px;width:17px;text-align:center;">13</div>
<div style="position:absolute;left:0px;top:392px;width:17px;height:1px;background:#c6c6c6;"></div>
<div style="position:absolute;top:382.38px;font:normal 9px/9px 'Liberation Sans', sans-serif;color:#333;white-space:nowrap;-webkit-text-stroke:0.25px currentColor;left:0.0px;width:17px;text-align:center;">14</div>
<div style="position:absolute;left:0px;top:409px;width:17px;height:1px;background:#c6c6c6;"></div>
<div style="position:absolute;top:399.18px;font:normal 9px/9px 'Liberation Sans', sans-serif;color:#333;white-space:nowrap;-webkit-text-stroke:0.25px currentColor;left:0.0px;width:17px;text-align:center;">15</div>
<div style="position:absolute;left:0px;top:421px;width:17px;height:1px;background:#c6c6c6;"></div>
<div style="position:absolute;top:411.08px;font:normal 9px/9px 'Liberation Sans', sans-serif;color:#333;white-space:nowrap;-webkit-text-stroke:0.25px currentColor;left:0.0px;width:17px;text-align:center;">16</div>
<div style="position:absolute;left:0px;top:434px;width:17px;height:1px;background:#c6c6c6;"></div>
<div style="position:absolute;top:423.68px;font:normal 9px/9px 'Liberation Sans', sans-serif;color:#333;white-space:nowrap;-webkit-text-stroke:0.25px currentColor;left:0.0px;width:17px;text-align:center;">17</div>
<div style="position:absolute;left:0px;top:434px;width:17px;height:12px;background:#d2d2d2;"></div>
<div style="position:absolute;left:15px;top:434px;width:2px;height:12px;background:#217346;"></div>
<div style="position:absolute;left:0px;top:446px;width:17px;height:1px;background:#c6c6c6;"></div>
<div style="position:absolute;top:436.28px;font:normal 9px/9px 'Liberation Sans', sans-serif;color:#217346;white-space:nowrap;-webkit-text-stroke:0.25px currentColor;left:0.0px;width:17px;text-align:center;">18</div>
<div style="position:absolute;left:0px;top:459px;width:17px;height:1px;background:#c6c6c6;"></div>
<div style="position:absolute;top:449.08px;font:normal 9px/9px 'Liberation Sans', sans-serif;color:#333;white-space:nowrap;-webkit-text-stroke:0.25px currentColor;left:0.0px;width:17px;text-align:center;">19</div>
<div style="position:absolute;left:0px;top:472px;width:17px;height:1px;background:#c6c6c6;"></div>
<div style="position:absolute;top:461.68px;font:normal 9px/9px 'Liberation Sans', sans-serif;color:#333;white-space:nowrap;-webkit-text-stroke:0.25px currentColor;left:0.0px;width:17px;text-align:center;">20</div>
<div style="position:absolute;left:0px;top:484px;width:17px;height:1px;background:#c6c6c6;"></div>
<div style="position:absolute;top:474.08px;font:normal 9px/9px 'Liberation Sans', sans-serif;color:#333;white-space:nowrap;-webkit-text-stroke:0.25px currentColor;left:0.0px;width:17px;text-align:center;">21</div>
<div style="position:absolute;left:0px;top:497px;width:17px;height:1px;background:#c6c6c6;"></div>
<div style="position:absolute;top:486.48px;font:normal 9px/9px 'Liberation Sans', sans-serif;color:#333;white-space:nowrap;-webkit-text-stroke:0.25px currentColor;left:0.0px;width:17px;text-align:center;">22</div>
<div style="position:absolute;left:0px;top:509px;width:17px;height:1px;background:#c6c6c6;"></div>
<div style="position:absolute;top:498.88px;font:normal 9px/9px 'Liberation Sans', sans-serif;color:#333;white-space:nowrap;-webkit-text-stroke:0.25px currentColor;left:0.0px;width:17px;text-align:center;">23</div>
<div style="position:absolute;left:0px;top:525px;width:17px;height:1px;background:#c6c6c6;"></div>
<div style="position:absolute;top:515.18px;font:normal 9px/9px 'Liberation Sans', sans-serif;color:#333;white-space:nowrap;-webkit-text-stroke:0.25px currentColor;left:0.0px;width:17px;text-align:center;">24</div>
<div style="position:absolute;left:0px;top:538px;width:17px;height:1px;background:#c6c6c6;"></div>
<div style="position:absolute;top:527.88px;font:normal 9px/9px 'Liberation Sans', sans-serif;color:#333;white-space:nowrap;-webkit-text-stroke:0.25px currentColor;left:0.0px;width:17px;text-align:center;">25</div>
<div style="position:absolute;left:0px;top:551px;width:17px;height:1px;background:#c6c6c6;"></div>
<div style="position:absolute;top:540.88px;font:normal 9px/9px 'Liberation Sans', sans-serif;color:#333;white-space:nowrap;-webkit-text-stroke:0.25px currentColor;left:0.0px;width:17px;text-align:center;">26</div>
<svg style="position:absolute;left:8px;top:160px" width="8" height="8"><path d="M7 0 L7 7 L0 7 Z" fill="#c8c8c8"/></svg>
<div style="position:absolute;left:18px;top:169px;width:1011px;height:20px;background:#a59f94;"></div>
<div style="position:absolute;top:170.46px;font:normal 17px/17px 'Liberation Serif', serif;color:#f4f1ec;white-space:nowrap;transform:scaleX(1.007);transform-origin:left;left:30px;">2019 GİDER TAKVİMİ</div>
<div style="position:absolute;top:214.60px;font:normal 32px/32px 'Liberation Serif', serif;color:#a59f94;white-space:nowrap;transform:scaleX(1.004);transform-origin:left;left:34px;">OCAK</div>
<div style="position:absolute;top:210.01px;font:bold 10.5px/10.5px 'Liberation Serif', serif;color:#404040;white-space:nowrap;transform:scaleX(1.006);transform-origin:right;right:459.5px;text-align:right;">AYLIK TOPLAM</div>
<div style="position:absolute;top:210.01px;font:bold 10.5px/10.5px 'Liberation Serif', serif;color:#404040;white-space:nowrap;transform:scaleX(1.027);transform-origin:right;right:328.5px;text-align:right;">GENEL TOPLAM</div>
<div style="position:absolute;left:683px;top:221px;width:131px;height:29px;background:#82bd81;"></div>
<div style="position:absolute;left:815px;top:221px;width:132px;height:29px;background:#82bd81;"></div>
<div style="position:absolute;top:228.47px;font:bold 14px/14px 'Liberation Serif', serif;color:#fff;white-space:nowrap;transform:scaleX(1.161);transform-origin:right;right:455.70000000000005px;text-align:right;">239,95 Ł</div>
<div style="position:absolute;top:228.47px;font:bold 14px/14px 'Liberation Serif', serif;color:#fff;white-space:nowrap;transform:scaleX(1.143);transform-origin:right;right:325px;text-align:right;">439,95 Ł</div>
<div style="position:absolute;left:27px;top:260px;width:1002px;height:16px;background:#808080;"></div>
<div style="position:absolute;top:262.80px;font:normal 10.4px/10.4px 'Liberation Sans', sans-serif;color:#f2f2f2;white-space:nowrap;left:27.5px;width:130px;text-align:center;">PAZARTESİ</div>
<div style="position:absolute;left:158px;top:259px;width:1px;height:17px;background:#c0c0c0;"></div>
<div style="position:absolute;top:262.80px;font:normal 10.4px/10.4px 'Liberation Sans', sans-serif;color:#f2f2f2;white-space:nowrap;left:158.5px;width:130px;text-align:center;">SALI</div>
<div style="position:absolute;left:289px;top:259px;width:1px;height:17px;background:#c0c0c0;"></div>
<div style="position:absolute;top:262.80px;font:normal 10.4px/10.4px 'Liberation Sans', sans-serif;color:#f2f2f2;white-space:nowrap;left:289.5px;width:130px;text-align:center;">ÇARŞAMBA</div>
<div style="position:absolute;left:420px;top:259px;width:1px;height:17px;background:#c0c0c0;"></div>
<div style="position:absolute;top:262.80px;font:normal 10.4px/10.4px 'Liberation Sans', sans-serif;color:#f2f2f2;white-space:nowrap;left:421.0px;width:130px;text-align:center;">PERŞEMBE</div>
<div style="position:absolute;left:552px;top:259px;width:1px;height:17px;background:#c0c0c0;"></div>
<div style="position:absolute;top:262.80px;font:normal 10.4px/10.4px 'Liberation Sans', sans-serif;color:#f2f2f2;white-space:nowrap;left:552.5px;width:130px;text-align:center;">CUMA</div>
<div style="position:absolute;left:683px;top:259px;width:1px;height:17px;background:#c0c0c0;"></div>
<div style="position:absolute;top:262.80px;font:normal 10.4px/10.4px 'Liberation Sans', sans-serif;color:#f2f2f2;white-space:nowrap;left:683.5px;width:130px;text-align:center;">CUMARTESİ</div>
<div style="position:absolute;left:814px;top:259px;width:1px;height:17px;background:#c0c0c0;"></div>
<div style="position:absolute;top:262.80px;font:normal 10.4px/10.4px 'Liberation Sans', sans-serif;color:#f2f2f2;white-space:nowrap;left:815.0px;width:130px;text-align:center;">PAZAR</div>
<div style="position:absolute;left:946px;top:259px;width:1px;height:17px;background:#c0c0c0;"></div>
<div style="position:absolute;top:263.89px;font:normal 8.4px/8.4px 'Liberation Sans', sans-serif;color:#f2f2f2;white-space:nowrap;transform:scaleX(0.973);transform-origin:center;left:946.4px;width:82px;text-align:center;">HAFTALIK TOPLAM</div>
<div style="position:absolute;left:27px;top:276px;width:919px;height:16px;background:#d9d9d9;"></div>
<div style="position:absolute;left:946px;top:276px;width:83px;height:91px;background:#d9d9d9;"></div>
<div style="position:absolute;top:278.93px;font:normal 12.5px/12.5px 'Liberation Serif', serif;color:#bfbfbf;white-space:nowrap;left:62.5px;width:60px;text-align:center;">31</div>
<div style="position:absolute;top:295.16px;font:normal 8.2px/8.2px 'Liberation Sans', sans-serif;color:#c8c8c8;white-space:nowrap;transform:scaleX(1.001);transform-origin:left;left:29px;">AÇIKLAMA</div>
<div style="position:absolute;top:295.16px;font:normal 8.2px/8.2px 'Liberation Sans', sans-serif;color:#c8c8c8;white-space:nowrap;transform:scaleX(1.048);transform-origin:right;right:1111px;text-align:right;">TUTAR</div>
<div style="position:absolute;left:158px;top:292px;width:1px;height:75px;background:#d9d9d9;"></div>
<div style="position:absolute;left:92px;top:292px;width:1px;height:75px;background:repeating-linear-gradient(180deg,#cbcbcb 0 1px,transparent 1px 3px)"></div>
<div style="position:absolute;top:278.93px;font:normal 12.5px/12.5px 'Liberation Serif', serif;color:#4a4a4a;white-space:nowrap;left:193.5px;width:60px;text-align:center;">1</div>
<div style="position:absolute;top:295.16px;font:normal 8.2px/8.2px 'Liberation Sans', sans-serif;color:#7a7a7a;white-space:nowrap;transform:scaleX(1.001);transform-origin:left;left:160px;">AÇIKLAMA</div>
<div style="position:absolute;top:295.16px;font:normal 8.2px/8.2px 'Liberation Sans', sans-serif;color:#7a7a7a;white-space:nowrap;transform:scaleX(1.048);transform-origin:right;right:980px;text-align:right;">TUTAR</div>
<div style="position:absolute;left:289px;top:292px;width:1px;height:75px;background:#d9d9d9;"></div>
<div style="position:absolute;left:224px;top:292px;width:1px;height:75px;background:repeating-linear-gradient(180deg,#cbcbcb 0 1px,transparent 1px 3px)"></div>
<div style="position:absolute;top:278.93px;font:normal 12.5px/12.5px 'Liberation Serif', serif;color:#4a4a4a;white-space:nowrap;left:324.5px;width:60px;text-align:center;">2</div>
<div style="position:absolute;top:295.16px;font:normal 8.2px/8.2px 'Liberation Sans', sans-serif;color:#7a7a7a;white-space:nowrap;transform:scaleX(1.001);transform-origin:left;left:291px;">AÇIKLAMA</div>
<div style="position:absolute;top:295.16px;font:normal 8.2px/8.2px 'Liberation Sans', sans-serif;color:#7a7a7a;white-space:nowrap;transform:scaleX(1.048);transform-origin:right;right:849px;text-align:right;">TUTAR</div>
<div style="position:absolute;left:420px;top:292px;width:1px;height:75px;background:#d9d9d9;"></div>
<div style="position:absolute;left:355px;top:292px;width:1px;height:75px;background:repeating-linear-gradient(180deg,#cbcbcb 0 1px,transparent 1px 3px)"></div>
<div style="position:absolute;top:278.93px;font:normal 12.5px/12.5px 'Liberation Serif', serif;color:#4a4a4a;white-space:nowrap;left:456.0px;width:60px;text-align:center;">3</div>
<div style="position:absolute;top:295.16px;font:normal 8.2px/8.2px 'Liberation Sans', sans-serif;color:#7a7a7a;white-space:nowrap;transform:scaleX(1.001);transform-origin:left;left:422px;">AÇIKLAMA</div>
<div style="position:absolute;top:295.16px;font:normal 8.2px/8.2px 'Liberation Sans', sans-serif;color:#7a7a7a;white-space:nowrap;transform:scaleX(1.048);transform-origin:right;right:717px;text-align:right;">TUTAR</div>
<div style="position:absolute;left:552px;top:292px;width:1px;height:75px;background:#d9d9d9;"></div>
<div style="position:absolute;left:486px;top:292px;width:1px;height:75px;background:repeating-linear-gradient(180deg,#cbcbcb 0 1px,transparent 1px 3px)"></div>
<div style="position:absolute;top:278.93px;font:normal 12.5px/12.5px 'Liberation Serif', serif;color:#4a4a4a;white-space:nowrap;left:587.5px;width:60px;text-align:center;">4</div>
<div style="position:absolute;top:295.16px;font:normal 8.2px/8.2px 'Liberation Sans', sans-serif;color:#7a7a7a;white-space:nowrap;transform:scaleX(1.001);transform-origin:left;left:554px;">AÇIKLAMA</div>
<div style="position:absolute;top:295.16px;font:normal 8.2px/8.2px 'Liberation Sans', sans-serif;color:#7a7a7a;white-space:nowrap;transform:scaleX(1.048);transform-origin:right;right:586px;text-align:right;">TUTAR</div>
<div style="position:absolute;left:683px;top:292px;width:1px;height:75px;background:#d9d9d9;"></div>
<div style="position:absolute;left:617px;top:292px;width:1px;height:75px;background:repeating-linear-gradient(180deg,#cbcbcb 0 1px,transparent 1px 3px)"></div>
<div style="position:absolute;top:278.93px;font:normal 12.5px/12.5px 'Liberation Serif', serif;color:#4a4a4a;white-space:nowrap;left:718.5px;width:60px;text-align:center;">5</div>
<div style="position:absolute;top:295.16px;font:normal 8.2px/8.2px 'Liberation Sans', sans-serif;color:#7a7a7a;white-space:nowrap;transform:scaleX(1.001);transform-origin:left;left:685px;">AÇIKLAMA</div>
<div style="position:absolute;top:295.16px;font:normal 8.2px/8.2px 'Liberation Sans', sans-serif;color:#7a7a7a;white-space:nowrap;transform:scaleX(1.048);transform-origin:right;right:455px;text-align:right;">TUTAR</div>
<div style="position:absolute;left:814px;top:292px;width:1px;height:75px;background:#d9d9d9;"></div>
<div style="position:absolute;left:749px;top:292px;width:1px;height:75px;background:repeating-linear-gradient(180deg,#cbcbcb 0 1px,transparent 1px 3px)"></div>
<div style="position:absolute;top:278.93px;font:normal 12.5px/12.5px 'Liberation Serif', serif;color:#4a4a4a;white-space:nowrap;left:850.0px;width:60px;text-align:center;">6</div>
<div style="position:absolute;top:295.16px;font:normal 8.2px/8.2px 'Liberation Sans', sans-serif;color:#7a7a7a;white-space:nowrap;transform:scaleX(1.001);transform-origin:left;left:816px;">AÇIKLAMA</div>
<div style="position:absolute;top:295.16px;font:normal 8.2px/8.2px 'Liberation Sans', sans-serif;color:#7a7a7a;white-space:nowrap;transform:scaleX(1.048);transform-origin:right;right:323px;text-align:right;">TUTAR</div>
<div style="position:absolute;left:946px;top:292px;width:1px;height:75px;background:#d9d9d9;"></div>
<div style="position:absolute;left:880px;top:292px;width:1px;height:75px;background:repeating-linear-gradient(180deg,#cbcbcb 0 1px,transparent 1px 3px)"></div>
<div style="position:absolute;left:27px;top:292px;width:1px;height:75px;background:#d9d9d9;"></div>
<div style="position:absolute;left:27px;top:305px;width:919px;height:1px;background:#d9d9d9;"></div>
<div style="position:absolute;left:28px;top:317px;width:918px;height:1px;background:repeating-linear-gradient(90deg,#cbcbcb 0 1px,transparent 1px 3px)"></div>
<div style="position:absolute;left:28px;top:330px;width:918px;height:1px;background:repeating-linear-gradient(90deg,#cbcbcb 0 1px,transparent 1px 3px)"></div>
<div style="position:absolute;left:28px;top:342px;width:918px;height:1px;background:repeating-linear-gradient(90deg,#cbcbcb 0 1px,transparent 1px 3px)"></div>
<div style="position:absolute;left:28px;top:355px;width:918px;height:1px;background:repeating-linear-gradient(90deg,#cbcbcb 0 1px,transparent 1px 3px)"></div>
<div style="position:absolute;left:158px;top:276px;width:1px;height:16px;background:#c4c4c4;"></div>
<div style="position:absolute;left:289px;top:276px;width:1px;height:16px;background:#c4c4c4;"></div>
<div style="position:absolute;left:420px;top:276px;width:1px;height:16px;background:#c4c4c4;"></div>
<div style="position:absolute;left:552px;top:276px;width:1px;height:16px;background:#c4c4c4;"></div>
<div style="position:absolute;left:683px;top:276px;width:1px;height:16px;background:#c4c4c4;"></div>
<div style="position:absolute;left:814px;top:276px;width:1px;height:16px;background:#c4c4c4;"></div>
<div style="position:absolute;left:27px;top:292px;width:919px;height:1px;background:#c8c8c8;"></div>
<div style="position:absolute;left:27px;top:367px;width:131px;height:13px;background:#e3efdf;"></div>
<div style="position:absolute;top:369.16px;font:bold 9.6px/9.6px 'Liberation Serif', serif;color:#fbfbfb;white-space:nowrap;transform:scaleX(0.965);transform-origin:left;left:29px;">TOPLAM</div>
<div style="position:absolute;top:369.16px;font:bold 9.6px/9.6px 'Liberation Serif', serif;color:#fbfbfb;white-space:nowrap;transform:scaleX(1.150);transform-origin:right;right:1112px;text-align:right;">0,00 Ł</div>
<div style="position:absolute;left:159px;top:367px;width:130px;height:13px;background:#82bd81;"></div>
<div style="position:absolute;top:369.16px;font:bold 9.6px/9.6px 'Liberation Serif', serif;color:#fff;white-space:nowrap;transform:scaleX(1.150);transform-origin:right;right:981px;text-align:right;">0,00 Ł</div>
<div style="position:absolute;left:290px;top:367px;width:130px;height:13px;background:#82bd81;"></div>
<div style="position:absolute;top:369.16px;font:bold 9.6px/9.6px 'Liberation Serif', serif;color:#fff;white-space:nowrap;transform:scaleX(1.150);transform-origin:right;right:850px;text-align:right;">150,00 Ł</div>
<div style="position:absolute;left:421px;top:367px;width:131px;height:13px;background:#82bd81;"></div>
<div style="position:absolute;top:369.16px;font:bold 9.6px/9.6px 'Liberation Serif', serif;color:#fff;white-space:nowrap;transform:scaleX(1.150);transform-origin:right;right:718px;text-align:right;">89,95 Ł</div>
<div style="position:absolute;left:553px;top:367px;width:130px;height:13px;background:#82bd81;"></div>
<div style="position:absolute;top:369.16px;font:bold 9.6px/9.6px 'Liberation Serif', serif;color:#fff;white-space:nowrap;transform:scaleX(1.150);transform-origin:right;right:587px;text-align:right;">0,00 Ł</div>
<div style="position:absolute;left:684px;top:367px;width:130px;height:13px;background:#82bd81;"></div>
<div style="position:absolute;top:369.16px;font:bold 9.6px/9.6px 'Liberation Serif', serif;color:#fff;white-space:nowrap;transform:scaleX(1.150);transform-origin:right;right:456px;text-align:right;">0,00 Ł</div>
<div style="position:absolute;left:815px;top:367px;width:131px;height:13px;background:#82bd81;"></div>
<div style="position:absolute;top:369.16px;font:bold 9.6px/9.6px 'Liberation Serif', serif;color:#fff;white-space:nowrap;transform:scaleX(1.150);transform-origin:right;right:324px;text-align:right;">0,00 Ł</div>
<div style="position:absolute;left:947px;top:367px;width:82px;height:13px;background:#82bd81;"></div>
<div style="position:absolute;top:369.16px;font:bold 9.6px/9.6px 'Liberation Serif', serif;color:#fff;white-space:nowrap;transform:scaleX(1.150);transform-origin:right;right:241px;text-align:right;">239,95 Ł</div>
<div style="position:absolute;top:306.79px;font:normal 8.4px/8.4px 'Liberation Sans', sans-serif;color:#262626;white-space:nowrap;left:291px;">Telefon</div>
<div style="position:absolute;top:306.79px;font:normal 8.4px/8.4px 'Liberation Sans', sans-serif;color:#262626;white-space:nowrap;right:850px;text-align:right;">150,00 Ł</div>
<div style="position:absolute;top:306.79px;font:normal 8.4px/8.4px 'Liberation Sans', sans-serif;color:#262626;white-space:nowrap;left:422px;">Elbise</div>
<div style="position:absolute;top:306.79px;font:normal 8.4px/8.4px 'Liberation Sans', sans-serif;color:#262626;white-space:nowrap;right:718px;text-align:right;">85,00 Ł</div>
<div style="position:absolute;top:319.49px;font:normal 8.4px/8.4px 'Liberation Sans', sans-serif;color:#262626;white-space:nowrap;left:422px;">Askıları</div>
<div style="position:absolute;top:319.49px;font:normal 8.4px/8.4px 'Liberation Sans', sans-serif;color:#262626;white-space:nowrap;right:718px;text-align:right;">4,95 Ł</div>
<div style="position:absolute;left:27px;top:392px;width:919px;height:17px;background:#d9d9d9;"></div>
<div style="position:absolute;left:946px;top:392px;width:83px;height:92px;background:#d9d9d9;"></div>
<div style="position:absolute;top:395.83px;font:normal 12.5px/12.5px 'Liberation Serif', serif;color:#4a4a4a;white-space:nowrap;left:62.5px;width:60px;text-align:center;">7</div>
<div style="position:absolute;top:411.36px;font:normal 8.2px/8.2px 'Liberation Sans', sans-serif;color:#7a7a7a;white-space:nowrap;transform:scaleX(1.001);transform-origin:left;left:29px;">AÇIKLAMA</div>
<div style="position:absolute;top:411.36px;font:normal 8.2px/8.2px 'Liberation Sans', sans-serif;color:#7a7a7a;white-space:nowrap;transform:scaleX(1.048);transform-origin:right;right:1111px;text-align:right;">TUTAR</div>
<div style="position:absolute;left:158px;top:409px;width:1px;height:75px;background:#d9d9d9;"></div>
<div style="position:absolute;left:92px;top:409px;width:1px;height:75px;background:repeating-linear-gradient(180deg,#cbcbcb 0 1px,transparent 1px 3px)"></div>
<div style="position:absolute;top:395.83px;font:normal 12.5px/12.5px 'Liberation Serif', serif;color:#4a4a4a;white-space:nowrap;left:193.5px;width:60px;text-align:center;">8</div>
<div style="position:absolute;top:411.36px;font:normal 8.2px/8.2px 'Liberation Sans', sans-serif;color:#7a7a7a;white-space:nowrap;transform:scaleX(1.001);transform-origin:left;left:160px;">AÇIKLAMA</div>
<div style="position:absolute;top:411.36px;font:normal 8.2px/8.2px 'Liberation Sans', sans-serif;color:#7a7a7a;white-space:nowrap;transform:scaleX(1.048);transform-origin:right;right:980px;text-align:right;">TUTAR</div>
<div style="position:absolute;left:289px;top:409px;width:1px;height:75px;background:#d9d9d9;"></div>
<div style="position:absolute;left:224px;top:409px;width:1px;height:75px;background:repeating-linear-gradient(180deg,#cbcbcb 0 1px,transparent 1px 3px)"></div>
<div style="position:absolute;top:395.83px;font:normal 12.5px/12.5px 'Liberation Serif', serif;color:#4a4a4a;white-space:nowrap;left:324.5px;width:60px;text-align:center;">9</div>
<div style="position:absolute;top:411.36px;font:normal 8.2px/8.2px 'Liberation Sans', sans-serif;color:#7a7a7a;white-space:nowrap;transform:scaleX(1.001);transform-origin:left;left:291px;">AÇIKLAMA</div>
<div style="position:absolute;top:411.36px;font:normal 8.2px/8.2px 'Liberation Sans', sans-serif;color:#7a7a7a;white-space:nowrap;transform:scaleX(1.048);transform-origin:right;right:849px;text-align:right;">TUTAR</div>
<div style="position:absolute;left:420px;top:409px;width:1px;height:75px;background:#d9d9d9;"></div>
<div style="position:absolute;left:355px;top:409px;width:1px;height:75px;background:repeating-linear-gradient(180deg,#cbcbcb 0 1px,transparent 1px 3px)"></div>
<div style="position:absolute;top:395.83px;font:normal 12.5px/12.5px 'Liberation Serif', serif;color:#4a4a4a;white-space:nowrap;left:456.0px;width:60px;text-align:center;">10</div>
<div style="position:absolute;top:411.36px;font:normal 8.2px/8.2px 'Liberation Sans', sans-serif;color:#7a7a7a;white-space:nowrap;transform:scaleX(1.001);transform-origin:left;left:422px;">AÇIKLAMA</div>
<div style="position:absolute;top:411.36px;font:normal 8.2px/8.2px 'Liberation Sans', sans-serif;color:#7a7a7a;white-space:nowrap;transform:scaleX(1.048);transform-origin:right;right:717px;text-align:right;">TUTAR</div>
<div style="position:absolute;left:552px;top:409px;width:1px;height:75px;background:#d9d9d9;"></div>
<div style="position:absolute;left:486px;top:409px;width:1px;height:75px;background:repeating-linear-gradient(180deg,#cbcbcb 0 1px,transparent 1px 3px)"></div>
<div style="position:absolute;top:395.83px;font:normal 12.5px/12.5px 'Liberation Serif', serif;color:#4a4a4a;white-space:nowrap;left:587.5px;width:60px;text-align:center;">11</div>
<div style="position:absolute;top:411.36px;font:normal 8.2px/8.2px 'Liberation Sans', sans-serif;color:#7a7a7a;white-space:nowrap;transform:scaleX(1.001);transform-origin:left;left:554px;">AÇIKLAMA</div>
<div style="position:absolute;top:411.36px;font:normal 8.2px/8.2px 'Liberation Sans', sans-serif;color:#7a7a7a;white-space:nowrap;transform:scaleX(1.048);transform-origin:right;right:586px;text-align:right;">TUTAR</div>
<div style="position:absolute;left:683px;top:409px;width:1px;height:75px;background:#d9d9d9;"></div>
<div style="position:absolute;left:617px;top:409px;width:1px;height:75px;background:repeating-linear-gradient(180deg,#cbcbcb 0 1px,transparent 1px 3px)"></div>
<div style="position:absolute;top:395.83px;font:normal 12.5px/12.5px 'Liberation Serif', serif;color:#4a4a4a;white-space:nowrap;left:718.5px;width:60px;text-align:center;">12</div>
<div style="position:absolute;top:411.36px;font:normal 8.2px/8.2px 'Liberation Sans', sans-serif;color:#7a7a7a;white-space:nowrap;transform:scaleX(1.001);transform-origin:left;left:685px;">AÇIKLAMA</div>
<div style="position:absolute;top:411.36px;font:normal 8.2px/8.2px 'Liberation Sans', sans-serif;color:#7a7a7a;white-space:nowrap;transform:scaleX(1.048);transform-origin:right;right:455px;text-align:right;">TUTAR</div>
<div style="position:absolute;left:814px;top:409px;width:1px;height:75px;background:#d9d9d9;"></div>
<div style="position:absolute;left:749px;top:409px;width:1px;height:75px;background:repeating-linear-gradient(180deg,#cbcbcb 0 1px,transparent 1px 3px)"></div>
<div style="position:absolute;top:395.83px;font:normal 12.5px/12.5px 'Liberation Serif', serif;color:#4a4a4a;white-space:nowrap;left:850.0px;width:60px;text-align:center;">13</div>
<div style="position:absolute;top:411.36px;font:normal 8.2px/8.2px 'Liberation Sans', sans-serif;color:#7a7a7a;white-space:nowrap;transform:scaleX(1.001);transform-origin:left;left:816px;">AÇIKLAMA</div>
<div style="position:absolute;top:411.36px;font:normal 8.2px/8.2px 'Liberation Sans', sans-serif;color:#7a7a7a;white-space:nowrap;transform:scaleX(1.048);transform-origin:right;right:323px;text-align:right;">TUTAR</div>
<div style="position:absolute;left:946px;top:409px;width:1px;height:75px;background:#d9d9d9;"></div>
<div style="position:absolute;left:880px;top:409px;width:1px;height:75px;background:repeating-linear-gradient(180deg,#cbcbcb 0 1px,transparent 1px 3px)"></div>
<div style="position:absolute;left:27px;top:409px;width:1px;height:75px;background:#d9d9d9;"></div>
<div style="position:absolute;left:27px;top:421px;width:919px;height:1px;background:#d9d9d9;"></div>
<div style="position:absolute;left:28px;top:434px;width:918px;height:1px;background:repeating-linear-gradient(90deg,#cbcbcb 0 1px,transparent 1px 3px)"></div>
<div style="position:absolute;left:28px;top:446px;width:918px;height:1px;background:repeating-linear-gradient(90deg,#cbcbcb 0 1px,transparent 1px 3px)"></div>
<div style="position:absolute;left:28px;top:459px;width:918px;height:1px;background:repeating-linear-gradient(90deg,#cbcbcb 0 1px,transparent 1px 3px)"></div>
<div style="position:absolute;left:28px;top:472px;width:918px;height:1px;background:repeating-linear-gradient(90deg,#cbcbcb 0 1px,transparent 1px 3px)"></div>
<div style="position:absolute;left:158px;top:392px;width:1px;height:17px;background:#c4c4c4;"></div>
<div style="position:absolute;left:289px;top:392px;width:1px;height:17px;background:#c4c4c4;"></div>
<div style="position:absolute;left:420px;top:392px;width:1px;height:17px;background:#c4c4c4;"></div>
<div style="position:absolute;left:552px;top:392px;width:1px;height:17px;background:#c4c4c4;"></div>
<div style="position:absolute;left:683px;top:392px;width:1px;height:17px;background:#c4c4c4;"></div>
<div style="position:absolute;left:814px;top:392px;width:1px;height:17px;background:#c4c4c4;"></div>
<div style="position:absolute;left:27px;top:409px;width:919px;height:1px;background:#c8c8c8;"></div>
<div style="position:absolute;left:27px;top:484px;width:131px;height:13px;background:#82bd81;"></div>
<div style="position:absolute;top:485.76px;font:bold 9.6px/9.6px 'Liberation Serif', serif;color:#f4f9e8;white-space:nowrap;transform:scaleX(0.965);transform-origin:left;left:29px;">TOPLAM</div>
<div style="position:absolute;top:485.76px;font:bold 9.6px/9.6px 'Liberation Serif', serif;color:#fff;white-space:nowrap;transform:scaleX(1.150);transform-origin:right;right:1112px;text-align:right;">0,00 Ł</div>
<div style="position:absolute;left:159px;top:484px;width:130px;height:13px;background:#82bd81;"></div>
<div style="position:absolute;top:485.76px;font:bold 9.6px/9.6px 'Liberation Serif', serif;color:#fff;white-space:nowrap;transform:scaleX(1.150);transform-origin:right;right:981px;text-align:right;">0,00 Ł</div>
<div style="position:absolute;left:290px;top:484px;width:130px;height:13px;background:#82bd81;"></div>
<div style="position:absolute;top:485.76px;font:bold 9.6px/9.6px 'Liberation Serif', serif;color:#fff;white-space:nowrap;transform:scaleX(1.150);transform-origin:right;right:850px;text-align:right;">0,00 Ł</div>
<div style="position:absolute;left:421px;top:484px;width:131px;height:13px;background:#82bd81;"></div>
<div style="position:absolute;top:485.76px;font:bold 9.6px/9.6px 'Liberation Serif', serif;color:#fff;white-space:nowrap;transform:scaleX(1.150);transform-origin:right;right:718px;text-align:right;">0,00 Ł</div>
<div style="position:absolute;left:553px;top:484px;width:130px;height:13px;background:#82bd81;"></div>
<div style="position:absolute;top:485.76px;font:bold 9.6px/9.6px 'Liberation Serif', serif;color:#fff;white-space:nowrap;transform:scaleX(1.150);transform-origin:right;right:587px;text-align:right;">0,00 Ł</div>
<div style="position:absolute;left:684px;top:484px;width:130px;height:13px;background:#82bd81;"></div>
<div style="position:absolute;top:485.76px;font:bold 9.6px/9.6px 'Liberation Serif', serif;color:#fff;white-space:nowrap;transform:scaleX(1.150);transform-origin:right;right:456px;text-align:right;">0,00 Ł</div>
<div style="position:absolute;left:815px;top:484px;width:131px;height:13px;background:#82bd81;"></div>
<div style="position:absolute;top:485.76px;font:bold 9.6px/9.6px 'Liberation Serif', serif;color:#fff;white-space:nowrap;transform:scaleX(1.150);transform-origin:right;right:324px;text-align:right;">0,00 Ł</div>
<div style="position:absolute;left:947px;top:484px;width:82px;height:13px;background:#82bd81;"></div>
<div style="position:absolute;top:485.76px;font:bold 9.6px/9.6px 'Liberation Serif', serif;color:#fff;white-space:nowrap;transform:scaleX(1.150);transform-origin:right;right:241px;text-align:right;">0,00 Ł</div>
<div style="position:absolute;left:27px;top:509px;width:919px;height:16px;background:#d9d9d9;"></div>
<div style="position:absolute;left:946px;top:509px;width:83px;height:35px;background:#d9d9d9;"></div>
<div style="position:absolute;top:511.83px;font:normal 12.5px/12.5px 'Liberation Serif', serif;color:#4a4a4a;white-space:nowrap;left:62.5px;width:60px;text-align:center;">14</div>
<div style="position:absolute;top:528.16px;font:normal 8.2px/8.2px 'Liberation Sans', sans-serif;color:#7a7a7a;white-space:nowrap;transform:scaleX(1.001);transform-origin:left;left:29px;">AÇIKLAMA</div>
<div style="position:absolute;top:528.16px;font:normal 8.2px/8.2px 'Liberation Sans', sans-serif;color:#7a7a7a;white-space:nowrap;transform:scaleX(1.048);transform-origin:right;right:1111px;text-align:right;">TUTAR</div>
<div style="position:absolute;left:158px;top:509px;width:1px;height:16px;background:#c4c4c4;"></div>
<div style="position:absolute;left:158px;top:525px;width:1px;height:20px;background:#d9d9d9;"></div>
<div style="position:absolute;left:92px;top:525px;width:1px;height:20px;background:repeating-linear-gradient(180deg,#cbcbcb 0 1px,transparent 1px 3px)"></div>
<div style="position:absolute;top:511.83px;font:normal 12.5px/12.5px 'Liberation Serif', serif;color:#4a4a4a;white-space:nowrap;left:193.5px;width:60px;text-align:center;">15</div>
<div style="position:absolute;top:528.16px;font:normal 8.2px/8.2px 'Liberation Sans', sans-serif;color:#7a7a7a;white-space:nowrap;transform:scaleX(1.001);transform-origin:left;left:160px;">AÇIKLAMA</div>
<div style="position:absolute;top:528.16px;font:normal 8.2px/8.2px 'Liberation Sans', sans-serif;color:#7a7a7a;white-space:nowrap;transform:scaleX(1.048);transform-origin:right;right:980px;text-align:right;">TUTAR</div>
<div style="position:absolute;left:289px;top:509px;width:1px;height:16px;background:#c4c4c4;"></div>
<div style="position:absolute;left:289px;top:525px;width:1px;height:20px;background:#d9d9d9;"></div>
<div style="position:absolute;left:224px;top:525px;width:1px;height:20px;background:repeating-linear-gradient(180deg,#cbcbcb 0 1px,transparent 1px 3px)"></div>
<div style="position:absolute;top:511.83px;font:normal 12.5px/12.5px 'Liberation Serif', serif;color:#4a4a4a;white-space:nowrap;left:324.5px;width:60px;text-align:center;">16</div>
<div style="position:absolute;top:528.16px;font:normal 8.2px/8.2px 'Liberation Sans', sans-serif;color:#7a7a7a;white-space:nowrap;transform:scaleX(1.001);transform-origin:left;left:291px;">AÇIKLAMA</div>
<div style="position:absolute;top:528.16px;font:normal 8.2px/8.2px 'Liberation Sans', sans-serif;color:#7a7a7a;white-space:nowrap;transform:scaleX(1.048);transform-origin:right;right:849px;text-align:right;">TUTAR</div>
<div style="position:absolute;left:420px;top:509px;width:1px;height:16px;background:#c4c4c4;"></div>
<div style="position:absolute;left:420px;top:525px;width:1px;height:20px;background:#d9d9d9;"></div>
<div style="position:absolute;left:355px;top:525px;width:1px;height:20px;background:repeating-linear-gradient(180deg,#cbcbcb 0 1px,transparent 1px 3px)"></div>
<div style="position:absolute;top:511.83px;font:normal 12.5px/12.5px 'Liberation Serif', serif;color:#4a4a4a;white-space:nowrap;left:456.0px;width:60px;text-align:center;">17</div>
<div style="position:absolute;top:528.16px;font:normal 8.2px/8.2px 'Liberation Sans', sans-serif;color:#7a7a7a;white-space:nowrap;transform:scaleX(1.001);transform-origin:left;left:422px;">AÇIKLAMA</div>
<div style="position:absolute;top:528.16px;font:normal 8.2px/8.2px 'Liberation Sans', sans-serif;color:#7a7a7a;white-space:nowrap;transform:scaleX(1.048);transform-origin:right;right:717px;text-align:right;">TUTAR</div>
<div style="position:absolute;left:552px;top:509px;width:1px;height:16px;background:#c4c4c4;"></div>
<div style="position:absolute;left:552px;top:525px;width:1px;height:20px;background:#d9d9d9;"></div>
<div style="position:absolute;left:486px;top:525px;width:1px;height:20px;background:repeating-linear-gradient(180deg,#cbcbcb 0 1px,transparent 1px 3px)"></div>
<div style="position:absolute;top:511.83px;font:normal 12.5px/12.5px 'Liberation Serif', serif;color:#4a4a4a;white-space:nowrap;left:587.5px;width:60px;text-align:center;">18</div>
<div style="position:absolute;top:528.16px;font:normal 8.2px/8.2px 'Liberation Sans', sans-serif;color:#7a7a7a;white-space:nowrap;transform:scaleX(1.001);transform-origin:left;left:554px;">AÇIKLAMA</div>
<div style="position:absolute;top:528.16px;font:normal 8.2px/8.2px 'Liberation Sans', sans-serif;color:#7a7a7a;white-space:nowrap;transform:scaleX(1.048);transform-origin:right;right:586px;text-align:right;">TUTAR</div>
<div style="position:absolute;left:683px;top:509px;width:1px;height:16px;background:#c4c4c4;"></div>
<div style="position:absolute;left:683px;top:525px;width:1px;height:20px;background:#d9d9d9;"></div>
<div style="position:absolute;left:617px;top:525px;width:1px;height:20px;background:repeating-linear-gradient(180deg,#cbcbcb 0 1px,transparent 1px 3px)"></div>
<div style="position:absolute;top:511.83px;font:normal 12.5px/12.5px 'Liberation Serif', serif;color:#4a4a4a;white-space:nowrap;left:718.5px;width:60px;text-align:center;">19</div>
<div style="position:absolute;top:528.16px;font:normal 8.2px/8.2px 'Liberation Sans', sans-serif;color:#7a7a7a;white-space:nowrap;transform:scaleX(1.001);transform-origin:left;left:685px;">AÇIKLAMA</div>
<div style="position:absolute;top:528.16px;font:normal 8.2px/8.2px 'Liberation Sans', sans-serif;color:#7a7a7a;white-space:nowrap;transform:scaleX(1.048);transform-origin:right;right:455px;text-align:right;">TUTAR</div>
<div style="position:absolute;left:814px;top:509px;width:1px;height:16px;background:#c4c4c4;"></div>
<div style="position:absolute;left:814px;top:525px;width:1px;height:20px;background:#d9d9d9;"></div>
<div style="position:absolute;left:749px;top:525px;width:1px;height:20px;background:repeating-linear-gradient(180deg,#cbcbcb 0 1px,transparent 1px 3px)"></div>
<div style="position:absolute;top:511.83px;font:normal 12.5px/12.5px 'Liberation Serif', serif;color:#4a4a4a;white-space:nowrap;left:850.0px;width:60px;text-align:center;">20</div>
<div style="position:absolute;top:528.16px;font:normal 8.2px/8.2px 'Liberation Sans', sans-serif;color:#7a7a7a;white-space:nowrap;transform:scaleX(1.001);transform-origin:left;left:816px;">AÇIKLAMA</div>
<div style="position:absolute;top:528.16px;font:normal 8.2px/8.2px 'Liberation Sans', sans-serif;color:#7a7a7a;white-space:nowrap;transform:scaleX(1.048);transform-origin:right;right:323px;text-align:right;">TUTAR</div>
<div style="position:absolute;left:946px;top:525px;width:1px;height:20px;background:#d9d9d9;"></div>
<div style="position:absolute;left:880px;top:525px;width:1px;height:20px;background:repeating-linear-gradient(180deg,#cbcbcb 0 1px,transparent 1px 3px)"></div>
<div style="position:absolute;left:27px;top:525px;width:1px;height:20px;background:#d9d9d9;"></div>
<div style="position:absolute;left:27px;top:538px;width:919px;height:1px;background:#d9d9d9;"></div>
<div style="position:absolute;left:1029px;top:169px;width:239px;height:375px;background:#000;"></div>
<svg style="position:absolute;left:260px;top:165px" width="200" height="80"><path d="M17.5 8 H193.5 V72.5 H17.5 V34 L5 18.5 H17.5 Z" fill="#fff" stroke="#a8d08d" stroke-width="1"/></svg>
<div style="position:absolute;top:187.84px;font:normal 10px/10px 'Liberation Sans', sans-serif;color:#a3a09b;white-space:nowrap;transform:scaleX(1.104);transform-origin:left;left:285.2px;">İPUCU: Bu hücreye çift tıklayın</div>
<div style="position:absolute;top:200.84px;font:normal 10px/10px 'Liberation Sans', sans-serif;color:#a3a09b;white-space:nowrap;transform:scaleX(1.106);transform-origin:left;left:285.2px;">ve takvim yılını güncelleştirmek</div>
<div style="position:absolute;top:213.84px;font:normal 10px/10px 'Liberation Sans', sans-serif;color:#a3a09b;white-space:nowrap;transform:scaleX(1.103);transform-origin:left;left:285.2px;">için yılı değiştirin.</div>
<svg style="position:absolute;left:1061.9px;top:215.7px;overflow:visible;" width="140.7" height="23.1" viewBox="0 0 609 100" preserveAspectRatio="none"><path d="M0 0 H25 L70 100 H45 Z" fill="#fff"/><path d="M0 100 H25 L70 0 H45 Z" fill="#fff"/><path d="M45 0 H66 A33 50 0 0 1 66 100 H45 V82 H66 A15 32 0 0 0 66 18 H45 Z" fill="#45ad48"/><g fill="none" stroke="#fff" stroke-width="5.5"><path d="M150 2.75 H112.25 V97.25 H150 M112.25 50 H148"/><path d="M158 0 L208 100 M208 0 L158 100"/><path d="M274.5 15 A30.5 47.75 0 1 0 274.5 85"/><path d="M325 2.75 H289.75 V97.25 H325 M289.75 50 H323"/><path d="M338.75 0 V97.25 H371"/></g><path fill-rule="evenodd" d="M380 0 H400 A31.600000000000023 50 0 0 1 400 100 H380 Z M396 16 H400 A15.600000000000023 34 0 0 1 400 84 H396 Z M437 0 H481 V16 H453 V43 H478 V57 H453 V84 H481 V100 H437 Z M486 0 H510 A20 31 0 0 1 510 62 H502 V100 H486 Z M502 16 H510 A4 17 0 0 1 510 48 H502 Z M535.5 50 A36.75 50 0 1 0 609 50 A36.75 50 0 1 0 535.5 50 Z M551.5 50 A20.75 34 0 1 1 593 50 A20.75 34 0 1 1 551.5 50 Z" fill="#45ad48"/></svg>
<svg style="position:absolute;left:1061.3px;top:263.9px;overflow:visible;" width="164.1" height="27" viewBox="0 0 657 100" preserveAspectRatio="none"><path d="M0 0 H25 L70 100 H45 Z" fill="#fff"/><path d="M0 100 H25 L70 0 H45 Z" fill="#fff"/><path d="M45 0 H66 A33 50 0 0 1 66 100 H45 V82 H66 A15 32 0 0 0 66 18 H45 Z" fill="#c6e1f5"/><g fill="none" stroke="#fff" stroke-width="5.5"><path d="M150 2.75 H112.25 V97.25 H150 M112.25 50 H148"/><path d="M158 0 L208 100 M208 0 L158 100"/><path d="M274.5 15 A30.5 47.75 0 1 0 274.5 85"/><path d="M325 2.75 H289.75 V97.25 H325 M289.75 50 H323"/><path d="M338.75 0 V97.25 H371"/></g><path fill-rule="evenodd" d="M373 0 H393 A31 50 0 0 1 393 100 H373 Z M389 16 H393 A15 34 0 0 1 393 84 H389 Z M430 0 H469.5 V16 H446 V43 H466.5 V57 H446 V84 H469.5 V100 H430 Z M520.6 0 H563.5 V16 H550.05 V100 H534.05 V16 H520.6 Z M566 0 H603 V16 H582 V43 H600 V57 H582 V84 H603 V100 H566 Z M606 0 H622 V100 H606 Z M656 0 H639 L622 42 V62 Z M628 44 L657 100 H638 L618 58 Z" fill="#c6e1f5"/><path d="M514 15 C 505 3, 482 5, 482 27 C 482 47, 511 47, 511 72 C 511 96, 484 97, 477 85" fill="none" stroke="#c6e1f5" stroke-width="16"/></svg>
<div style="position:absolute;left:1166px;top:433px;width:49px;height:14px;background:transparent;border:2px solid #9fd3b0;"></div>
<div style="position:absolute;left:1211px;top:444px;width:5px;height:5px;background:#3a8a5a;border:1px solid #000;"></div>
<svg style="position:absolute;left:874px;top:463px;overflow:visible;" width="341" height="41.5" viewBox="0 0 609 100" preserveAspectRatio="none"><path d="M0 0 H25 L70 100 H45 Z" fill="rgba(70,80,90,0.3)"/><path d="M0 100 H25 L70 0 H45 Z" fill="rgba(70,80,90,0.3)"/><path d="M45 0 H66 A33 50 0 0 1 66 100 H45 V82 H66 A15 32 0 0 0 66 18 H45 Z" fill="rgba(60,176,67,0.25)"/><g fill="none" stroke="rgba(40,45,50,0.27)" stroke-width="4.5"><path d="M150 2.25 H111.75 V97.75 H150 M111.75 50 H148"/><path d="M158 0 L208 100 M208 0 L158 100"/><path d="M274.5 15 A30.5 47.75 0 1 0 274.5 85"/><path d="M325 2.25 H289.25 V97.75 H325 M289.25 50 H323"/><path d="M338.25 0 V97.75 H371"/></g><path fill-rule="evenodd" d="M380 0 H400 A31.600000000000023 50 0 0 1 400 100 H380 Z M396 16 H400 A15.600000000000023 34 0 0 1 400 84 H396 Z M437 0 H481 V16 H453 V43 H478 V57 H453 V84 H481 V100 H437 Z M486 0 H510 A20 31 0 0 1 510 62 H502 V100 H486 Z M502 16 H510 A4 17 0 0 1 510 48 H502 Z M535.5 50 A36.75 50 0 1 0 609 50 A36.75 50 0 1 0 535.5 50 Z M551.5 50 A20.75 34 0 1 1 593 50 A20.75 34 0 1 1 551.5 50 Z" fill="rgba(60,176,67,0.22)"/></svg>
<svg style="position:absolute;left:875.6px;top:470px;overflow:visible;" width="377.4" height="47" viewBox="0 0 609 100" preserveAspectRatio="none"><path d="M0 0 H25 L70 100 H45 Z" fill="#fff"/><path d="M0 100 H25 L70 0 H45 Z" fill="#fff"/><path d="M45 0 H66 A33 50 0 0 1 66 100 H45 V82 H66 A15 32 0 0 0 66 18 H45 Z" fill="#45ad48"/><g fill="none" stroke="#fff" stroke-width="4.5"><path d="M150 2.25 H111.75 V97.75 H150 M111.75 50 H148"/><path d="M158 0 L208 100 M208 0 L158 100"/><path d="M274.5 15 A30.5 47.75 0 1 0 274.5 85"/><path d="M325 2.25 H289.25 V97.75 H325 M289.25 50 H323"/><path d="M338.25 0 V97.75 H371"/></g><path fill-rule="evenodd" d="M380 0 H400 A31.600000000000023 50 0 0 1 400 100 H380 Z M396 16 H400 A15.600000000000023 34 0 0 1 400 84 H396 Z M437 0 H481 V16 H453 V43 H478 V57 H453 V84 H481 V100 H437 Z M486 0 H510 A20 31 0 0 1 510 62 H502 V100 H486 Z M502 16 H510 A4 17 0 0 1 510 48 H502 Z M535.5 50 A36.75 50 0 1 0 609 50 A36.75 50 0 1 0 535.5 50 Z M551.5 50 A20.75 34 0 1 1 593 50 A20.75 34 0 1 1 551.5 50 Z" fill="#45ad48"/></svg>
</body></html>
